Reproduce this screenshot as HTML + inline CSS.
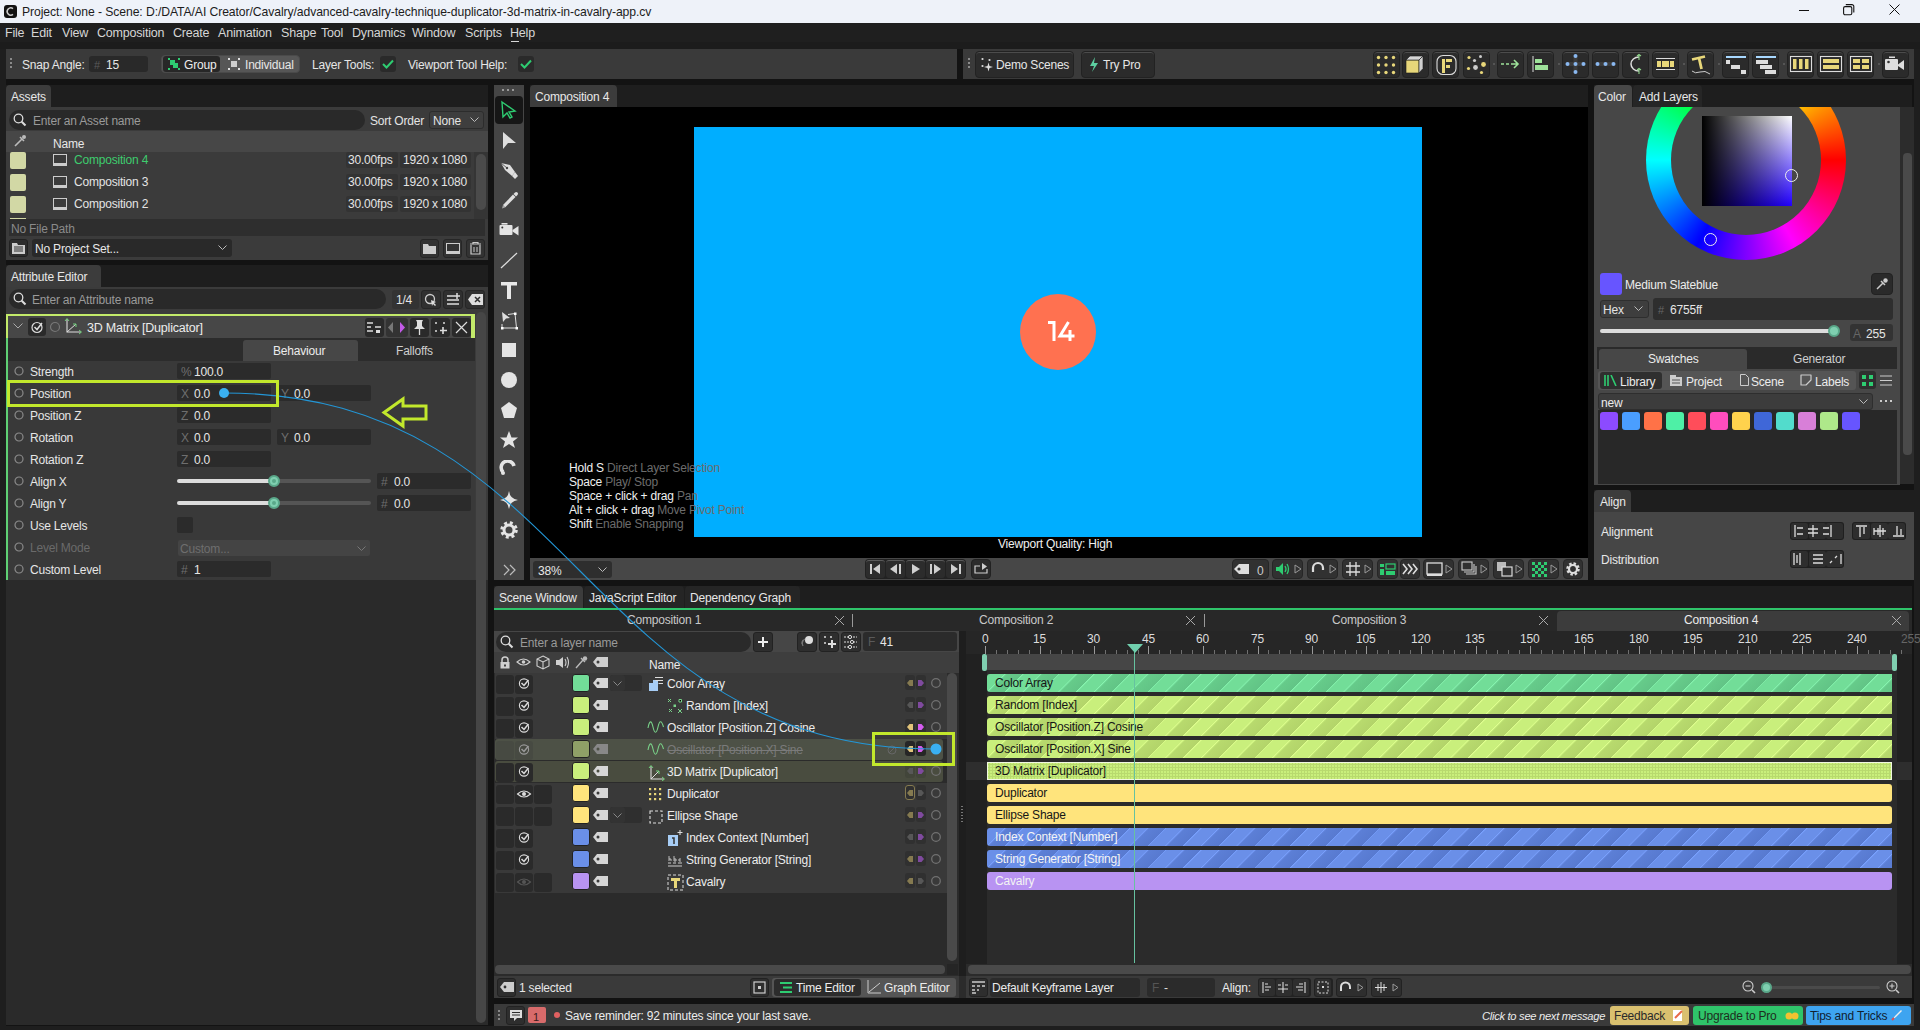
<!DOCTYPE html>
<html><head><meta charset="utf-8">
<style>
*{box-sizing:border-box;margin:0;padding:0}
html,body{width:1920px;height:1030px;overflow:hidden;background:#131313;font-family:"Liberation Sans",sans-serif;font-size:12px;color:#e4e4e4}
.a{position:absolute}
.t{position:absolute;white-space:nowrap;line-height:14px;letter-spacing:-0.2px;margin-top:1px}
</style></head><body>
<div class="a" style="left:0px;top:0px;width:1920px;height:23px;background:#eef2f9;"></div>
<div class="a" style="left:4px;top:5px;width:13px;height:13px;background:#121212;border-radius:3px;"></div>
<svg class="a" style="left:5px;top:6px" width="11" height="11" viewBox="0 0 11 11"><path d="M8 2.6A3.6 3.6 0 1 0 8 8.4" fill="none" stroke="#ccc" stroke-width="1.6"/></svg>
<div class="t" style="left:22px;top:4px;color:#1c1c1c;font-size:12.2px;letter-spacing:-0.09px;">Project: None - Scene: D:/DATA/AI Creator/Cavalry/advanced-cavalry-technique-duplicator-3d-matrix-in-cavalry-app.cv</div>
<div class="a" style="left:1799px;top:10px;width:10px;height:1px;background:#111;height:1.2px;"></div>
<svg class="a" style="left:1843px;top:4px" width="12" height="12"><rect x="0.6" y="2.6" width="8.2" height="8.2" rx="1.5" fill="none" stroke="#111" stroke-width="1.1"/><path d="M2.8 0.6H8.6A2 2 0 0 1 10.8 2.8V8.6" fill="none" stroke="#111" stroke-width="1.1"/></svg>
<svg class="a" style="left:1889px;top:4px" width="12" height="12"><path d="M0.5 0.5L10.5 10.5M10.5 0.5L0.5 10.5" stroke="#111" stroke-width="1"/></svg>
<div class="a" style="left:0px;top:23px;width:1920px;height:26px;background:#1c1c1c;"></div>
<div class="a" style="left:0px;top:23px;width:1920px;height:19px;background:#1f1f1f;"></div>
<div class="a" style="left:0px;top:49px;width:6px;height:981px;background:#1e1e1e;"></div>
<div class="a" style="left:1914px;top:49px;width:6px;height:981px;background:#1e1e1e;"></div>
<div class="a" style="left:0px;top:1026px;width:1920px;height:4px;background:#1e1e1e;"></div>
<div class="t" style="left:5px;top:25px;color:#d6d6d6;font-size:12.5px;">File</div>
<div class="t" style="left:31px;top:25px;color:#d6d6d6;font-size:12.5px;">Edit</div>
<div class="t" style="left:62px;top:25px;color:#d6d6d6;font-size:12.5px;">View</div>
<div class="t" style="left:97px;top:25px;color:#d6d6d6;font-size:12.5px;">Composition</div>
<div class="t" style="left:173px;top:25px;color:#d6d6d6;font-size:12.5px;">Create</div>
<div class="t" style="left:218px;top:25px;color:#d6d6d6;font-size:12.5px;">Animation</div>
<div class="t" style="left:281px;top:25px;color:#d6d6d6;font-size:12.5px;">Shape</div>
<div class="t" style="left:321px;top:25px;color:#d6d6d6;font-size:12.5px;">Tool</div>
<div class="t" style="left:352px;top:25px;color:#d6d6d6;font-size:12.5px;">Dynamics</div>
<div class="t" style="left:412px;top:25px;color:#d6d6d6;font-size:12.5px;">Window</div>
<div class="t" style="left:465px;top:25px;color:#d6d6d6;font-size:12.5px;">Scripts</div>
<div class="t" style="left:510px;top:25px;color:#d6d6d6;font-size:12.5px;">Help</div>
<div class="a" style="left:511px;top:41px;width:8px;height:1px;background:#d6d6d6;"></div>
<div class="a" style="left:6px;top:49px;width:951px;height:30px;background:#3a3a3a;"></div>
<div class="a" style="left:10px;top:58px;width:2px;height:2px;background:#8a8a8a;"></div>
<div class="a" style="left:10px;top:62px;width:2px;height:2px;background:#8a8a8a;"></div>
<div class="a" style="left:10px;top:66px;width:2px;height:2px;background:#8a8a8a;"></div>
<div class="t" style="left:22px;top:57px;color:#e6e6e6;font-size:12px;">Snap Angle:</div>
<div class="a" style="left:89px;top:56px;width:59px;height:16px;background:#292929;border-radius:3px;"></div>
<div class="t" style="left:94px;top:57px;color:#5a5a5a;font-size:11px;">#</div>
<div class="t" style="left:106px;top:57px;color:#e6e6e6;font-size:12px;">15</div>
<div class="a" style="left:161px;top:55px;width:139px;height:18px;background:#565656;border-radius:4px;border:1px solid #4a4a4a;"></div>
<div class="a" style="left:163px;top:56px;width:57px;height:16px;background:#272727;border-radius:3px;"></div>
<svg class="a" style="left:168px;top:58px;" width="12" height="12" viewBox="0 0 12 12"><rect x="0" y="0" width="2" height="2" fill="#2ecc71"/><rect x="10" y="0" width="2" height="2" fill="#2ecc71"/><rect x="0" y="10" width="2" height="2" fill="#2ecc71"/><rect x="10" y="10" width="2" height="2" fill="#2ecc71"/><rect x="2" y="2" width="5" height="5" fill="#2ecc71"/><rect x="5" y="5" width="5" height="5" fill="#2ecc71"/></svg>
<div class="t" style="left:184px;top:57px;color:#eeeeee;font-size:12px;">Group</div>
<svg class="a" style="left:228px;top:58px;" width="12" height="12" viewBox="0 0 12 12"><rect x="0" y="0" width="2" height="2" fill="#ddd"/><rect x="10" y="0" width="2" height="2" fill="#ddd"/><rect x="0" y="10" width="2" height="2" fill="#ddd"/><rect x="10" y="10" width="2" height="2" fill="#ddd"/><rect x="3" y="3" width="6" height="6" fill="#ccc"/></svg>
<div class="t" style="left:245px;top:57px;color:#e6e6e6;font-size:12px;">Individual</div>
<div class="t" style="left:312px;top:57px;color:#e6e6e6;font-size:12px;">Layer Tools:</div>
<div class="a" style="left:380px;top:56px;width:16px;height:16px;background:#2a2a2a;border-radius:3px;"></div>
<svg class="a" style="left:382px;top:59px;" width="12" height="10" viewBox="0 0 12 10"><path d="M1 5L4.5 8.5L11 1.5" fill="none" stroke="#2ecc71" stroke-width="2"/></svg>
<div class="t" style="left:408px;top:57px;color:#e6e6e6;font-size:12px;">Viewport Tool Help:</div>
<div class="a" style="left:518px;top:56px;width:16px;height:16px;background:#2a2a2a;border-radius:3px;"></div>
<svg class="a" style="left:520px;top:59px;" width="12" height="10" viewBox="0 0 12 10"><path d="M1 5L4.5 8.5L11 1.5" fill="none" stroke="#2ecc71" stroke-width="2"/></svg>
<div class="a" style="left:963px;top:49px;width:951px;height:30px;background:#3a3a3a;"></div>
<div class="a" style="left:968px;top:58px;width:2px;height:2px;background:#8a8a8a;"></div>
<div class="a" style="left:968px;top:62px;width:2px;height:2px;background:#8a8a8a;"></div>
<div class="a" style="left:968px;top:66px;width:2px;height:2px;background:#8a8a8a;"></div>
<div class="a" style="left:975px;top:51px;width:99px;height:27px;background:#2b2b2b;border-radius:4px;border:1px solid #222;box-shadow:inset 0 1px 0 #4c4c4c;"></div>
<svg class="a" style="left:980px;top:57px;" width="16" height="16" viewBox="0 0 16 16"><circle cx="2.5" cy="2" r="1.1" fill="#ddd"/><circle cx="9.5" cy="3" r="1.1" fill="#ddd"/><circle cx="2.5" cy="9" r="1.1" fill="#ddd"/><path d="M8.5 5.5L9.5 9L13 10L9.5 11L8.5 14.5L7.5 11L4 10L7.5 9Z" fill="#ddd"/></svg>
<div class="t" style="left:996px;top:57px;color:#e6e6e6;font-size:12px;">Demo Scenes</div>
<div class="a" style="left:1081px;top:51px;width:74px;height:27px;background:#2b2b2b;border-radius:4px;border:1px solid #222;box-shadow:inset 0 1px 0 #4c4c4c;"></div>
<svg class="a" style="left:1089px;top:57px;" width="10" height="16" viewBox="0 0 10 16"><path d="M6 0L1 9H5L3 15L9 6H5Z" fill="#5ccfa0"/></svg>
<div class="t" style="left:1103px;top:57px;color:#e6e6e6;font-size:12px;">Try Pro</div>
<div class="a" style="left:1373px;top:51px;width:27px;height:27px;background:#2b2b2b;border-radius:4px;border:1px solid #222;box-shadow:inset 0 1px 0 #4c4c4c;"></div>
<div class="a" style="left:1402px;top:51px;width:27px;height:27px;background:#2b2b2b;border-radius:4px;border:1px solid #222;box-shadow:inset 0 1px 0 #4c4c4c;"></div>
<div class="a" style="left:1432px;top:51px;width:27px;height:27px;background:#2b2b2b;border-radius:4px;border:1px solid #222;box-shadow:inset 0 1px 0 #4c4c4c;"></div>
<div class="a" style="left:1463px;top:51px;width:27px;height:27px;background:#2b2b2b;border-radius:4px;border:1px solid #222;box-shadow:inset 0 1px 0 #4c4c4c;"></div>
<div class="a" style="left:1497px;top:51px;width:27px;height:27px;background:#2b2b2b;border-radius:4px;border:1px solid #222;box-shadow:inset 0 1px 0 #4c4c4c;"></div>
<div class="a" style="left:1527px;top:51px;width:27px;height:27px;background:#2b2b2b;border-radius:4px;border:1px solid #222;box-shadow:inset 0 1px 0 #4c4c4c;"></div>
<div class="a" style="left:1562px;top:51px;width:27px;height:27px;background:#2b2b2b;border-radius:4px;border:1px solid #222;box-shadow:inset 0 1px 0 #4c4c4c;"></div>
<div class="a" style="left:1592px;top:51px;width:27px;height:27px;background:#2b2b2b;border-radius:4px;border:1px solid #222;box-shadow:inset 0 1px 0 #4c4c4c;"></div>
<div class="a" style="left:1622px;top:51px;width:27px;height:27px;background:#2b2b2b;border-radius:4px;border:1px solid #222;box-shadow:inset 0 1px 0 #4c4c4c;"></div>
<div class="a" style="left:1652px;top:51px;width:27px;height:27px;background:#2b2b2b;border-radius:4px;border:1px solid #222;box-shadow:inset 0 1px 0 #4c4c4c;"></div>
<div class="a" style="left:1687px;top:51px;width:27px;height:27px;background:#2b2b2b;border-radius:4px;border:1px solid #222;box-shadow:inset 0 1px 0 #4c4c4c;"></div>
<div class="a" style="left:1722px;top:51px;width:27px;height:27px;background:#2b2b2b;border-radius:4px;border:1px solid #222;box-shadow:inset 0 1px 0 #4c4c4c;"></div>
<div class="a" style="left:1752px;top:51px;width:27px;height:27px;background:#2b2b2b;border-radius:4px;border:1px solid #222;box-shadow:inset 0 1px 0 #4c4c4c;"></div>
<div class="a" style="left:1787px;top:51px;width:27px;height:27px;background:#2b2b2b;border-radius:4px;border:1px solid #222;box-shadow:inset 0 1px 0 #4c4c4c;"></div>
<div class="a" style="left:1817px;top:51px;width:27px;height:27px;background:#2b2b2b;border-radius:4px;border:1px solid #222;box-shadow:inset 0 1px 0 #4c4c4c;"></div>
<div class="a" style="left:1847px;top:51px;width:27px;height:27px;background:#2b2b2b;border-radius:4px;border:1px solid #222;box-shadow:inset 0 1px 0 #4c4c4c;"></div>
<div class="a" style="left:1882px;top:51px;width:27px;height:27px;background:#2b2b2b;border-radius:4px;border:1px solid #222;box-shadow:inset 0 1px 0 #4c4c4c;"></div>
<div class="a" style="left:1493px;top:63px;width:2px;height:2px;background:#555;"></div>
<div class="a" style="left:1558px;top:63px;width:2px;height:2px;background:#555;"></div>
<div class="a" style="left:1683px;top:63px;width:2px;height:2px;background:#555;"></div>
<div class="a" style="left:1718px;top:63px;width:2px;height:2px;background:#555;"></div>
<div class="a" style="left:1783px;top:63px;width:2px;height:2px;background:#555;"></div>
<div class="a" style="left:1878px;top:63px;width:2px;height:2px;background:#555;"></div>
<svg class="a" style="left:1373px;top:51px;" width="27" height="26" viewBox="0 0 27 26"><circle cx="5.5" cy="6.5" r="1.7" fill="#e8d77a"/><circle cx="5.5" cy="14.0" r="1.7" fill="#e8d77a"/><circle cx="5.5" cy="21.5" r="1.7" fill="#e8d77a"/><circle cx="13.0" cy="6.5" r="1.7" fill="#e8d77a"/><circle cx="13.0" cy="14.0" r="1.7" fill="#e8d77a"/><circle cx="13.0" cy="21.5" r="1.7" fill="#e8d77a"/><circle cx="20.5" cy="6.5" r="1.7" fill="#e8d77a"/><circle cx="20.5" cy="14.0" r="1.7" fill="#e8d77a"/><circle cx="20.5" cy="21.5" r="1.7" fill="#e8d77a"/></svg>
<svg class="a" style="left:1402px;top:51px;" width="27" height="26" viewBox="0 0 27 26"><rect x="4" y="9" width="13" height="13" fill="#e8d77a" stroke="#1a1a1a" stroke-width="0.6"/><path d="M4 9L8 5H21L17 9Z" fill="#d6d6d6" stroke="#1a1a1a" stroke-width="0.6"/><path d="M17 9L21 5V17.5L17 22Z" fill="#d0d0d0" stroke="#1a1a1a" stroke-width="0.6"/></svg>
<svg class="a" style="left:1432px;top:51px;" width="27" height="26" viewBox="0 0 27 26"><rect x="5" y="4.5" width="19" height="19" rx="6" fill="none" stroke="#ddd" stroke-width="1.1"/><rect x="10" y="8" width="3" height="14" fill="#e8d77a"/><rect x="14" y="8" width="6" height="3" fill="#e8d77a"/><rect x="14" y="14" width="4" height="3" fill="#e8d77a"/></svg>
<svg class="a" style="left:1463px;top:51px;" width="27" height="26" viewBox="0 0 27 26"><circle cx="6" cy="6.5" r="1.6" fill="#e8d77a"/><circle cx="17.5" cy="5.6" r="1.5" fill="#ccc"/><circle cx="11.5" cy="9.5" r="1.6" fill="#ccc"/><circle cx="20.5" cy="13.5" r="2.4" fill="#e8d77a"/><circle cx="5.5" cy="17.5" r="1.6" fill="#e8d77a"/><circle cx="12.5" cy="16.5" r="2.4" fill="#ccc"/><circle cx="18.5" cy="21.5" r="1.6" fill="#e8d77a"/></svg>
<svg class="a" style="left:1497px;top:51px;" width="27" height="26" viewBox="0 0 27 26"><path d="M4 13H7M9 13H12M14 13H21M17 9L21 13L17 17" fill="none" stroke="#9ee29a" stroke-width="1.6"/></svg>
<svg class="a" style="left:1527px;top:51px;" width="27" height="26" viewBox="0 0 27 26"><path d="M6 5V21" stroke="#ddd" stroke-width="1"/><rect x="8" y="8" width="7" height="4" fill="#9ee29a"/><rect x="8" y="14" width="13" height="5" fill="#9ee29a"/></svg>
<svg class="a" style="left:1562px;top:51px;" width="27" height="26" viewBox="0 0 27 26"><path d="M13.5 6V20M6 13H21" stroke="#3c3c3c" stroke-width="4"/><circle cx="13.5" cy="13" r="2" fill="#8ab8f0"/><circle cx="13.5" cy="5" r="2" fill="#8ab8f0"/><circle cx="13.5" cy="21" r="2" fill="#8ab8f0"/><circle cx="5.5" cy="13" r="2" fill="#8ab8f0"/><circle cx="21.5" cy="13" r="2" fill="#8ab8f0"/></svg>
<svg class="a" style="left:1592px;top:51px;" width="27" height="26" viewBox="0 0 27 26"><path d="M6 13H21" stroke="#3c3c3c" stroke-width="4"/><circle cx="5.5" cy="13" r="2" fill="#8ab8f0"/><circle cx="13.5" cy="13" r="2" fill="#8ab8f0"/><circle cx="21.5" cy="13" r="2" fill="#8ab8f0"/></svg>
<svg class="a" style="left:1622px;top:51px;" width="27" height="26" viewBox="0 0 27 26"><path d="M17 6A8 7 0 0 0 17 20" fill="none" stroke="#ddd" stroke-width="1.5"/><path d="M17 3V9M15 5L17 3.5L19 5M17 17V23M15 19L17 17.5L19 19" fill="none" stroke="#8fd48a" stroke-width="1.1"/></svg>
<svg class="a" style="left:1652px;top:51px;" width="27" height="26" viewBox="0 0 27 26"><path d="M4 7.5H23M4 18.5H23" stroke="#ddd" stroke-width="1"/><rect x="5" y="10" width="4" height="6" fill="#e8d77a"/><rect x="10" y="10" width="7" height="6" fill="#e8d77a"/><rect x="18" y="10" width="4" height="6" fill="#e8d77a"/></svg>
<svg class="a" style="left:1687px;top:51px;" width="27" height="26" viewBox="0 0 27 26"><path d="M5 8.5L18 5.5M12 7L14.5 18" fill="none" stroke="#e8d77a" stroke-width="2.8"/><path d="M5 20Q8 23 13 21T23 23" fill="none" stroke="#ccc" stroke-width="1"/></svg>
<svg class="a" style="left:1722px;top:51px;" width="27" height="26" viewBox="0 0 27 26"><path d="M4 6H24" stroke="#a8d8ff" stroke-width="2"/><rect x="4" y="9" width="4" height="4" fill="#ddd"/><rect x="9" y="14" width="9" height="4" fill="#ddd"/><rect x="19" y="19" width="5" height="4" fill="#ddd"/></svg>
<svg class="a" style="left:1752px;top:51px;" width="27" height="26" viewBox="0 0 27 26"><path d="M4 6H24" stroke="#a8d8ff" stroke-width="2"/><rect x="4" y="9" width="12" height="4" fill="#ddd"/><rect x="8" y="14" width="12" height="4" fill="#ddd"/><rect x="13" y="19" width="11" height="4" fill="#ddd"/></svg>
<svg class="a" style="left:1787px;top:51px;" width="27" height="26" viewBox="0 0 27 26"><rect x="3.5" y="5.5" width="21" height="15" fill="none" stroke="#ddd" stroke-width="1.1"/><rect x="6" y="8" width="3.5" height="10" fill="#e8d77a"/><rect x="12" y="8" width="3.5" height="10" fill="#e8d77a"/><rect x="18" y="8" width="3.5" height="10" fill="#e8d77a"/></svg>
<svg class="a" style="left:1817px;top:51px;" width="27" height="26" viewBox="0 0 27 26"><rect x="3.5" y="5.5" width="21" height="15" fill="none" stroke="#ddd" stroke-width="1.1"/><rect x="6" y="8" width="16" height="4" fill="#e8d77a"/><rect x="6" y="14" width="16" height="4" fill="#e8d77a"/></svg>
<svg class="a" style="left:1847px;top:51px;" width="27" height="26" viewBox="0 0 27 26"><rect x="3.5" y="5.5" width="21" height="15" fill="none" stroke="#ddd" stroke-width="1.1"/><rect x="6" y="8" width="7" height="4" fill="#e8d77a"/><rect x="15" y="8" width="7" height="4" fill="#e8d77a"/><rect x="6" y="14" width="7" height="4" fill="#e8d77a"/><rect x="15" y="14" width="7" height="4" fill="#e8d77a"/></svg>
<svg class="a" style="left:1882px;top:51px;" width="27" height="26" viewBox="0 0 27 26"><rect x="3" y="8" width="13" height="11" rx="1" fill="#ddd"/><circle cx="6.5" cy="11" r="1.3" fill="#333"/><path d="M16 13.5L22 9V19L16 15Z" fill="#ddd"/><rect x="7" y="5.5" width="6" height="1.5" fill="#ddd"/></svg>
<div class="a" style="left:6px;top:85px;width:482px;height:22px;background:#1e1e1e;"></div>
<div class="a" style="left:6px;top:85px;width:45px;height:22px;background:#3c3c3c;border-radius:4px 4px 0 0;"></div>
<div class="t" style="left:11px;top:89px;color:#e8e8e8;font-size:12px;">Assets</div>
<div class="a" style="left:6px;top:107px;width:482px;height:153px;background:#3b3b3b;"></div>
<div class="a" style="left:9px;top:110px;width:356px;height:20px;background:#292929;border-radius:10px;"></div>
<svg class="a" style="left:13px;top:113px;" width="14" height="14" viewBox="0 0 14 14"><circle cx="5.5" cy="5.5" r="4.3" fill="none" stroke="#ddd" stroke-width="1.3"/><path d="M8.7 8.7L12.5 12.5" stroke="#ddd" stroke-width="2"/></svg>
<div class="t" style="left:33px;top:113px;color:#9a9a9a;font-size:12px;">Enter an Asset name</div>
<div class="t" style="left:370px;top:113px;color:#e4e4e4;font-size:12px;">Sort Order</div>
<div class="a" style="left:429px;top:111px;width:55px;height:18px;background:#3e3e3e;border-radius:3px;border:1px solid #2c2c2c;"></div>
<div class="t" style="left:433px;top:113px;color:#e4e4e4;font-size:12px;">None</div>
<svg class="a" style="left:470px;top:117px;" width="9" height="6" viewBox="0 0 9 6"><path d="M0.5 0.5L4.5 4.5L8.5 0.5" fill="none" stroke="#bbb" stroke-width="1"/></svg>
<div class="a" style="left:6px;top:131px;width:482px;height:21px;background:#474747;"></div>
<svg class="a" style="left:13px;top:134px;" width="14" height="14" viewBox="0 0 14 14"><path d="M2 12L9 5M7 3L11 7" stroke="#bbb" stroke-width="1.6" fill="none"/><circle cx="11" cy="3" r="2" fill="#bbb"/></svg>
<div class="t" style="left:53px;top:136px;color:#e8e8e8;font-size:12px;">Name</div>
<div class="a" style="left:10px;top:152px;width:16px;height:17px;background:#d2d8a5;border-radius:2px;"></div>
<svg class="a" style="left:53px;top:154px;" width="15" height="13" viewBox="0 0 15 13"><rect x="0.5" y="0.5" width="13" height="9" fill="none" stroke="#ccc" stroke-width="1"/><rect x="0" y="10" width="14" height="2" fill="#ccc"/></svg>
<div class="t" style="left:74px;top:152px;color:#3ecc6e;font-size:12px;">Composition 4</div>
<div class="a" style="left:346px;top:152px;width:52px;height:16px;background:#333333;border-radius:2px;"></div>
<div class="t" style="left:348px;top:152px;color:#e4e4e4;font-size:12px;">30.00fps</div>
<div class="a" style="left:400px;top:152px;width:71px;height:16px;background:#333333;border-radius:2px;"></div>
<div class="t" style="left:403px;top:152px;color:#e4e4e4;font-size:12px;">1920 x 1080</div>
<div class="a" style="left:10px;top:174px;width:16px;height:17px;background:#d2d8a5;border-radius:2px;"></div>
<svg class="a" style="left:53px;top:176px;" width="15" height="13" viewBox="0 0 15 13"><rect x="0.5" y="0.5" width="13" height="9" fill="none" stroke="#ccc" stroke-width="1"/><rect x="0" y="10" width="14" height="2" fill="#ccc"/></svg>
<div class="t" style="left:74px;top:174px;color:#e4e4e4;font-size:12px;">Composition 3</div>
<div class="a" style="left:346px;top:174px;width:52px;height:16px;background:#333333;border-radius:2px;"></div>
<div class="t" style="left:348px;top:174px;color:#e4e4e4;font-size:12px;">30.00fps</div>
<div class="a" style="left:400px;top:174px;width:71px;height:16px;background:#333333;border-radius:2px;"></div>
<div class="t" style="left:403px;top:174px;color:#e4e4e4;font-size:12px;">1920 x 1080</div>
<div class="a" style="left:10px;top:196px;width:16px;height:17px;background:#d2d8a5;border-radius:2px;"></div>
<svg class="a" style="left:53px;top:198px;" width="15" height="13" viewBox="0 0 15 13"><rect x="0.5" y="0.5" width="13" height="9" fill="none" stroke="#ccc" stroke-width="1"/><rect x="0" y="10" width="14" height="2" fill="#ccc"/></svg>
<div class="t" style="left:74px;top:196px;color:#e4e4e4;font-size:12px;">Composition 2</div>
<div class="a" style="left:346px;top:196px;width:52px;height:16px;background:#333333;border-radius:2px;"></div>
<div class="t" style="left:348px;top:196px;color:#e4e4e4;font-size:12px;">30.00fps</div>
<div class="a" style="left:400px;top:196px;width:71px;height:16px;background:#333333;border-radius:2px;"></div>
<div class="t" style="left:403px;top:196px;color:#e4e4e4;font-size:12px;">1920 x 1080</div>
<div class="a" style="left:10px;top:218px;width:16px;height:2px;background:#d2d8a5;"></div>
<div class="a" style="left:474px;top:152px;width:14px;height:67px;background:#353535;"></div>
<div class="a" style="left:476px;top:154px;width:10px;height:56px;background:#4b4b4b;border-radius:5px;"></div>
<div class="a" style="left:9px;top:219px;width:476px;height:17px;background:#2e2e2e;"></div>
<div class="t" style="left:11px;top:221px;color:#8a8a8a;font-size:12px;">No File Path</div>
<div class="a" style="left:9px;top:239px;width:19px;height:18px;background:#2e2e2e;border-radius:3px;border:1px solid #222;"></div>
<svg class="a" style="left:12px;top:242px;" width="14" height="12" viewBox="0 0 14 12"><path d="M0 1H5L6 3H13V12H0Z" fill="#ccc"/><path d="M2 5H11M2 7H11M2 9H11" stroke="#333" stroke-width="1"/></svg>
<div class="a" style="left:32px;top:239px;width:200px;height:18px;background:#292929;border-radius:3px;"></div>
<div class="t" style="left:35px;top:241px;color:#e8e8e8;font-size:12px;">No Project Set...</div>
<svg class="a" style="left:218px;top:245px;" width="9" height="6" viewBox="0 0 9 6"><path d="M0.5 0.5L4.5 4.5L8.5 0.5" fill="none" stroke="#bbb" stroke-width="1"/></svg>
<div class="a" style="left:420px;top:239px;width:19px;height:19px;background:#333;border-radius:3px;border:1px solid #262626;"></div>
<div class="a" style="left:443px;top:239px;width:19px;height:19px;background:#333;border-radius:3px;border:1px solid #262626;"></div>
<div class="a" style="left:466px;top:239px;width:19px;height:19px;background:#333;border-radius:3px;border:1px solid #262626;"></div>
<svg class="a" style="left:423px;top:243px;" width="14" height="11" viewBox="0 0 14 11"><path d="M0 1H5L6 3H13V11H0Z" fill="#ccc"/></svg>
<svg class="a" style="left:446px;top:243px;" width="14" height="11" viewBox="0 0 14 11"><rect x="0.5" y="0.5" width="13" height="8" fill="none" stroke="#ccc"/><rect x="0" y="9" width="14" height="2" fill="#ccc"/></svg>
<svg class="a" style="left:469px;top:242px;" width="13" height="13" viewBox="0 0 13 13"><path d="M1 2H12M4 2V0.5H9V2M2 3V12H11V3" fill="none" stroke="#ccc" stroke-width="1.2"/><path d="M5 5V10M8 5V10" stroke="#ccc"/></svg>
<div class="a" style="left:6px;top:265px;width:482px;height:22px;background:#1e1e1e;"></div>
<div class="a" style="left:6px;top:265px;width:95px;height:22px;background:#3c3c3c;border-radius:4px 4px 0 0;"></div>
<div class="t" style="left:11px;top:269px;color:#e8e8e8;font-size:12px;">Attribute Editor</div>
<div class="a" style="left:6px;top:287px;width:482px;height:738px;background:#2a2a2a;"></div>
<div class="a" style="left:6px;top:287px;width:482px;height:293px;background:#3b3b3b;"></div>
<div class="a" style="left:9px;top:289px;width:377px;height:20px;background:#292929;border-radius:10px;"></div>
<svg class="a" style="left:13px;top:292px;" width="14" height="14" viewBox="0 0 14 14"><circle cx="5.5" cy="5.5" r="4.3" fill="none" stroke="#ddd" stroke-width="1.3"/><path d="M8.7 8.7L12.5 12.5" stroke="#ddd" stroke-width="2"/></svg>
<div class="t" style="left:32px;top:292px;color:#9a9a9a;font-size:12px;">Enter an Attribute name</div>
<div class="a" style="left:392px;top:290px;width:27px;height:19px;background:#333;border-radius:3px;"></div>
<div class="t" style="left:396px;top:292px;color:#e4e4e4;font-size:12px;">1/4</div>
<div class="a" style="left:421px;top:290px;width:20px;height:19px;background:#303030;border-radius:3px;border:1px solid #262626;"></div>
<div class="a" style="left:443px;top:290px;width:20px;height:19px;background:#303030;border-radius:3px;border:1px solid #262626;"></div>
<div class="a" style="left:465px;top:290px;width:20px;height:19px;background:#303030;border-radius:3px;border:1px solid #262626;"></div>
<svg class="a" style="left:424px;top:293px;" width="14" height="14" viewBox="0 0 14 14"><circle cx="6" cy="6" r="4.5" fill="none" stroke="#ccc" stroke-width="1.3"/><path d="M7 7L12 9L10 10L12 12L11 13L9 11L8 13Z" fill="#ddd"/></svg>
<svg class="a" style="left:446px;top:293px;" width="14" height="13" viewBox="0 0 14 13"><path d="M1 3H8M1 7H13M1 11H13M11 0V6M8 3H14" stroke="#ddd" stroke-width="1.5"/></svg>
<svg class="a" style="left:468px;top:294px;" width="15" height="11" viewBox="0 0 15 11"><path d="M4 0H15V11H4L0 5.5Z" fill="#ddd"/><path d="M7 3L12 8M12 3L7 8" stroke="#303030" stroke-width="1.5"/></svg>
<div class="a" style="left:6px;top:314px;width:469px;height:24px;background:#474747;border-top:2px solid #c3ea6a;border-left:2px solid #c3ea6a;border-right:4px solid #c3ea6a;"></div>
<div class="a" style="left:6px;top:338px;width:2px;height:242px;background:#5fcf74;"></div>
<svg class="a" style="left:13px;top:323px;" width="10" height="6" viewBox="0 0 10 6"><path d="M0.5 0.5L5 5L9.5 0.5" fill="none" stroke="#aaa" stroke-width="1"/></svg>
<div class="a" style="left:28px;top:318px;width:18px;height:18px;background:#2a2a2a;border-radius:3px;"></div>
<svg class="a" style="left:30px;top:320px;" width="14" height="14" viewBox="0 0 14 14"><circle cx="7" cy="7.5" r="5" fill="none" stroke="#ddd" stroke-width="1.2"/><path d="M4.5 7L7 9.5L12 3" fill="none" stroke="#ddd" stroke-width="1.5"/></svg>
<svg class="a" style="left:49px;top:321px;" width="12" height="12" viewBox="0 0 12 12"><circle cx="6" cy="6" r="4.5" fill="none" stroke="#777" stroke-width="1.2"/></svg>
<svg class="a" style="left:64px;top:317px;" width="19" height="18" viewBox="0 0 19 18"><path d="M3 2V15H17" fill="none" stroke="#ddd" stroke-width="1.1"/><path d="M3 15L12 7" stroke="#ddd" stroke-width="1"/><path d="M1 4L3 1.5L5 4M15 13L17.5 15L15 17M9 7H12V10" fill="none" stroke="#6fcf7a" stroke-width="1"/></svg>
<div class="t" style="left:87px;top:320px;color:#ececec;font-size:12.5px;">3D Matrix [Duplicator]</div>
<div class="a" style="left:365px;top:318px;width:19px;height:19px;background:#2a2a2a;border-radius:3px;"></div>
<svg class="a" style="left:367px;top:321px;" width="15" height="13" viewBox="0 0 15 13"><path d="M0 2H6M0 6H4M8 6H14M0 10H6" stroke="#ddd" stroke-width="1.5"/><rect x="9" y="9" width="4" height="3" fill="#ddd"/></svg>
<div class="a" style="left:386px;top:318px;width:22px;height:19px;background:#333;border-radius:3px;"></div>
<svg class="a" style="left:388px;top:322px;" width="18" height="11" viewBox="0 0 18 11"><path d="M5 0V11L0 5.5Z" fill="#777"/><path d="M12 0L17 5.5L12 11Z" fill="#c35ae8"/></svg>
<div class="a" style="left:410px;top:318px;width:19px;height:19px;background:#2a2a2a;border-radius:3px;"></div>
<svg class="a" style="left:413px;top:320px;" width="13" height="15" viewBox="0 0 13 15"><path d="M3 0H10L9 2V6L12 9H1L4 6V2Z" fill="#ddd"/><path d="M6.5 9V15" stroke="#ddd" stroke-width="1.3"/></svg>
<div class="a" style="left:431px;top:318px;width:19px;height:19px;background:#2a2a2a;border-radius:3px;"></div>
<svg class="a" style="left:433px;top:320px;" width="15" height="15" viewBox="0 0 15 15"><circle cx="3" cy="3" r="1" fill="#ddd"/><circle cx="11" cy="3" r="1" fill="#ddd"/><circle cx="3" cy="11" r="1" fill="#ddd"/><path d="M10 7V14M7 10.5H14" stroke="#ddd" stroke-width="1.6"/></svg>
<div class="a" style="left:452px;top:318px;width:19px;height:19px;background:#2a2a2a;border-radius:3px;"></div>
<svg class="a" style="left:455px;top:321px;" width="13" height="13" viewBox="0 0 13 13"><path d="M1 1L12 12M12 1L1 12" stroke="#ddd" stroke-width="1.2"/></svg>
<div class="a" style="left:8px;top:338px;width:467px;height:23px;background:#2c2c2c;"></div>
<div class="a" style="left:243px;top:340px;width:115px;height:21px;background:#474747;border-radius:3px 3px 0 0;"></div>
<div class="t" style="left:273px;top:343px;color:#ececec;font-size:12px;">Behaviour</div>
<div class="t" style="left:396px;top:343px;color:#cfcfcf;font-size:12px;">Falloffs</div>
<div class="a" style="left:8px;top:361px;width:467px;height:219px;background:#393939;"></div>
<div class="a" style="left:476px;top:312px;width:10px;height:711px;background:#464646;border-radius:5px;"></div>
<svg class="a" style="left:13px;top:365px;" width="12" height="12" viewBox="0 0 12 12"><circle cx="6" cy="6" r="4" fill="none" stroke="#8a8a8a" stroke-width="1.2"/></svg>
<div class="t" style="left:30px;top:364px;color:#e6e6e6;font-size:12px;">Strength</div>
<svg class="a" style="left:13px;top:387px;" width="12" height="12" viewBox="0 0 12 12"><circle cx="6" cy="6" r="4" fill="none" stroke="#8a8a8a" stroke-width="1.2"/></svg>
<div class="t" style="left:30px;top:386px;color:#e6e6e6;font-size:12px;">Position</div>
<svg class="a" style="left:13px;top:409px;" width="12" height="12" viewBox="0 0 12 12"><circle cx="6" cy="6" r="4" fill="none" stroke="#8a8a8a" stroke-width="1.2"/></svg>
<div class="t" style="left:30px;top:408px;color:#e6e6e6;font-size:12px;">Position Z</div>
<svg class="a" style="left:13px;top:431px;" width="12" height="12" viewBox="0 0 12 12"><circle cx="6" cy="6" r="4" fill="none" stroke="#8a8a8a" stroke-width="1.2"/></svg>
<div class="t" style="left:30px;top:430px;color:#e6e6e6;font-size:12px;">Rotation</div>
<svg class="a" style="left:13px;top:453px;" width="12" height="12" viewBox="0 0 12 12"><circle cx="6" cy="6" r="4" fill="none" stroke="#8a8a8a" stroke-width="1.2"/></svg>
<div class="t" style="left:30px;top:452px;color:#e6e6e6;font-size:12px;">Rotation Z</div>
<svg class="a" style="left:13px;top:475px;" width="12" height="12" viewBox="0 0 12 12"><circle cx="6" cy="6" r="4" fill="none" stroke="#8a8a8a" stroke-width="1.2"/></svg>
<div class="t" style="left:30px;top:474px;color:#e6e6e6;font-size:12px;">Align X</div>
<svg class="a" style="left:13px;top:497px;" width="12" height="12" viewBox="0 0 12 12"><circle cx="6" cy="6" r="4" fill="none" stroke="#8a8a8a" stroke-width="1.2"/></svg>
<div class="t" style="left:30px;top:496px;color:#e6e6e6;font-size:12px;">Align Y</div>
<svg class="a" style="left:13px;top:519px;" width="12" height="12" viewBox="0 0 12 12"><circle cx="6" cy="6" r="4" fill="none" stroke="#8a8a8a" stroke-width="1.2"/></svg>
<div class="t" style="left:30px;top:518px;color:#e6e6e6;font-size:12px;">Use Levels</div>
<svg class="a" style="left:13px;top:541px;" width="12" height="12" viewBox="0 0 12 12"><circle cx="6" cy="6" r="4" fill="none" stroke="#8a8a8a" stroke-width="1.2"/></svg>
<div class="t" style="left:30px;top:540px;color:#6a6a6a;font-size:12px;">Level Mode</div>
<svg class="a" style="left:13px;top:563px;" width="12" height="12" viewBox="0 0 12 12"><circle cx="6" cy="6" r="4" fill="none" stroke="#8a8a8a" stroke-width="1.2"/></svg>
<div class="t" style="left:30px;top:562px;color:#e6e6e6;font-size:12px;">Custom Level</div>
<div class="a" style="left:177px;top:363px;width:94px;height:16px;background:#2b2b2b;border-radius:2px;"></div>
<div class="t" style="left:181px;top:364px;color:#6e6e6e;font-size:12px;">%</div>
<div class="t" style="left:194px;top:364px;color:#e6e6e6;font-size:12px;">100.0</div>
<div class="a" style="left:177px;top:385px;width:94px;height:16px;background:#2b2b2b;border-radius:2px;"></div>
<div class="t" style="left:181px;top:386px;color:#6e6e6e;font-size:12px;">X</div>
<div class="t" style="left:194px;top:386px;color:#e6e6e6;font-size:12px;">0.0</div>
<div class="a" style="left:277px;top:385px;width:94px;height:16px;background:#2b2b2b;border-radius:2px;"></div>
<div class="t" style="left:281px;top:386px;color:#6e6e6e;font-size:12px;">Y</div>
<div class="t" style="left:294px;top:386px;color:#e6e6e6;font-size:12px;">0.0</div>
<div class="a" style="left:177px;top:407px;width:94px;height:16px;background:#2b2b2b;border-radius:2px;"></div>
<div class="t" style="left:181px;top:408px;color:#6e6e6e;font-size:12px;">Z</div>
<div class="t" style="left:194px;top:408px;color:#e6e6e6;font-size:12px;">0.0</div>
<div class="a" style="left:177px;top:429px;width:94px;height:16px;background:#2b2b2b;border-radius:2px;"></div>
<div class="t" style="left:181px;top:430px;color:#6e6e6e;font-size:12px;">X</div>
<div class="t" style="left:194px;top:430px;color:#e6e6e6;font-size:12px;">0.0</div>
<div class="a" style="left:277px;top:429px;width:94px;height:16px;background:#2b2b2b;border-radius:2px;"></div>
<div class="t" style="left:281px;top:430px;color:#6e6e6e;font-size:12px;">Y</div>
<div class="t" style="left:294px;top:430px;color:#e6e6e6;font-size:12px;">0.0</div>
<div class="a" style="left:177px;top:451px;width:94px;height:16px;background:#2b2b2b;border-radius:2px;"></div>
<div class="t" style="left:181px;top:452px;color:#6e6e6e;font-size:12px;">Z</div>
<div class="t" style="left:194px;top:452px;color:#e6e6e6;font-size:12px;">0.0</div>
<div class="a" style="left:177px;top:479px;width:97px;height:4px;background:#dcdcdc;border-radius:2px;"></div>
<div class="a" style="left:274px;top:479px;width:97px;height:4px;background:#555;border-radius:2px;"></div>
<div class="a" style="left:268px;top:475px;width:12px;height:12px;background:#7fcfb0;border-radius:50%;border:2px solid #5aa88a;"></div>
<div class="a" style="left:272px;top:479px;width:4px;height:4px;background:#5aa88a;border-radius:50%;"></div>
<div class="a" style="left:377px;top:473px;width:94px;height:16px;background:#2b2b2b;border-radius:2px;"></div>
<div class="t" style="left:381px;top:474px;color:#6e6e6e;font-size:12px;">#</div>
<div class="t" style="left:394px;top:474px;color:#e6e6e6;font-size:12px;">0.0</div>
<div class="a" style="left:177px;top:501px;width:97px;height:4px;background:#dcdcdc;border-radius:2px;"></div>
<div class="a" style="left:274px;top:501px;width:97px;height:4px;background:#555;border-radius:2px;"></div>
<div class="a" style="left:268px;top:497px;width:12px;height:12px;background:#7fcfb0;border-radius:50%;border:2px solid #5aa88a;"></div>
<div class="a" style="left:272px;top:501px;width:4px;height:4px;background:#5aa88a;border-radius:50%;"></div>
<div class="a" style="left:377px;top:495px;width:94px;height:16px;background:#2b2b2b;border-radius:2px;"></div>
<div class="t" style="left:381px;top:496px;color:#6e6e6e;font-size:12px;">#</div>
<div class="t" style="left:394px;top:496px;color:#e6e6e6;font-size:12px;">0.0</div>
<div class="a" style="left:177px;top:517px;width:16px;height:16px;background:#2b2b2b;border-radius:2px;"></div>
<div class="a" style="left:178px;top:540px;width:192px;height:16px;background:#444;border-radius:2px;"></div>
<div class="t" style="left:180px;top:541px;color:#6e6e6e;font-size:12px;">Custom...</div>
<svg class="a" style="left:357px;top:546px;" width="9" height="5" viewBox="0 0 9 5"><path d="M0.5 0.5L4.5 4.5L8.5 0.5" fill="none" stroke="#777" stroke-width="1"/></svg>
<div class="a" style="left:177px;top:561px;width:94px;height:16px;background:#2b2b2b;border-radius:2px;"></div>
<div class="t" style="left:181px;top:562px;color:#6e6e6e;font-size:12px;">#</div>
<div class="t" style="left:194px;top:562px;color:#e6e6e6;font-size:12px;">1</div>
<div class="a" style="left:494px;top:85px;width:30px;height:495px;background:#454545;"></div>
<div class="a" style="left:502px;top:89px;width:2px;height:2px;background:#999;"></div>
<div class="a" style="left:507px;top:89px;width:2px;height:2px;background:#999;"></div>
<div class="a" style="left:512px;top:89px;width:2px;height:2px;background:#999;"></div>
<div class="a" style="left:495px;top:96px;width:28px;height:28px;background:#161616;border-radius:4px;"></div>
<svg class="a" style="left:499px;top:100px;" width="20" height="20" viewBox="0 0 20 20"><path d="M3 2L16 11L10 12L13 17L11 18L8 13L4 17Z" fill="none" stroke="#2ecc71" stroke-width="1.4"/></svg>
<svg class="a" style="left:499px;top:130px;" width="20" height="20" viewBox="0 0 20 20"><path d="M4 2L17 13H9L4 19Z" fill="#dedede"/></svg>
<svg class="a" style="left:499px;top:160px;" width="20" height="20" viewBox="0 0 20 20"><path d="M2 3L11 5L16 12L13 16L6 10Z" fill="#dedede"/><path d="M13 16L16 19L19 16L16 12" fill="#dedede"/><circle cx="8" cy="8" r="1.2" fill="#444"/><path d="M2 3L8 8" stroke="#444" stroke-width="0.8"/></svg>
<svg class="a" style="left:499px;top:190px;" width="20" height="20" viewBox="0 0 20 20"><path d="M4 15L14 4.5L16.5 7L6 17.5Z" fill="#dedede"/><path d="M14.5 4L16 2.5A1.6 1.6 0 0 1 18.5 5L17 6.5Z" fill="#dedede"/><path d="M4 15L6 17.5L3 18.5Z" fill="#aaa"/></svg>
<svg class="a" style="left:499px;top:220px;" width="20" height="20" viewBox="0 0 20 20"><rect x="0.5" y="5" width="13" height="10" rx="1" fill="#e4e4e4"/><circle cx="3.3" cy="7.6" r="1" fill="#333"/><path d="M13.5 10L19.5 6V15.5L13.5 11.5Z" fill="#e4e4e4"/><rect x="2.5" y="3" width="6" height="1.6" fill="#e4e4e4"/></svg>
<svg class="a" style="left:499px;top:250px;" width="20" height="20" viewBox="0 0 20 20"><path d="M2 18L18 3" stroke="#dedede" stroke-width="1.2"/></svg>
<svg class="a" style="left:499px;top:280px;" width="20" height="20" viewBox="0 0 20 20"><path d="M2 2H18V5.5H12V19H8V5.5H2Z" fill="#e8e8e8"/></svg>
<svg class="a" style="left:499px;top:310px;" width="20" height="20" viewBox="0 0 20 20"><path d="M3 2L11 8L7 8.5L4 12Z" fill="#dedede"/><path d="M3 18H17.5L16 3.5L9 4.5M3 14V18" fill="none" stroke="#dedede" stroke-width="1"/><rect x="2" y="17" width="2.5" height="2.5" fill="#fff"/><rect x="16.5" y="17" width="2.5" height="2.5" fill="#fff"/><rect x="15" y="2.5" width="2.5" height="2.5" fill="#fff"/></svg>
<svg class="a" style="left:499px;top:340px;" width="20" height="20" viewBox="0 0 20 20"><rect x="3" y="3" width="14" height="14" fill="#e4e4e4"/></svg>
<svg class="a" style="left:499px;top:370px;" width="20" height="20" viewBox="0 0 20 20"><circle cx="10" cy="10" r="8" fill="#e4e4e4"/></svg>
<svg class="a" style="left:499px;top:400px;" width="20" height="20" viewBox="0 0 20 20"><path d="M10 2L18 8L15 18H5L2 8Z" fill="#e4e4e4"/></svg>
<svg class="a" style="left:499px;top:430px;" width="20" height="20" viewBox="0 0 20 20"><path d="M10 1L12.5 7.5H19L14 11.5L16 18L10 14L4 18L6 11.5L1 7.5H7.5Z" fill="#e4e4e4"/></svg>
<svg class="a" style="left:499px;top:460px;" width="20" height="20" viewBox="0 0 20 20"><path d="M4 12A6.5 6.5 0 1 1 15 6" fill="none" stroke="#e4e4e4" stroke-width="3.5"/><circle cx="4" cy="13" r="2" fill="#e4e4e4"/></svg>
<svg class="a" style="left:499px;top:490px;" width="20" height="20" viewBox="0 0 20 20"><path d="M10 1Q11 9 19 10Q11 11 10 19Q9 11 1 10Q9 9 10 1Z" fill="#e4e4e4"/></svg>
<svg class="a" style="left:499px;top:520px;" width="20" height="20" viewBox="0 0 20 20"><path d="M8.5 1H11.5L12 4L14.5 5L17 3L19 5.5L17 8L17.5 10.5L20 11.5V14.5L17 15L16 17L18 19.5L15.5 21.5" fill="none"/><circle cx="10" cy="10" r="6.5" fill="none" stroke="#e4e4e4" stroke-width="4.5" stroke-dasharray="2.6 2.5"/><circle cx="10" cy="10" r="5" fill="none" stroke="#e4e4e4" stroke-width="3"/></svg>
<svg class="a" style="left:502px;top:563px;" width="16" height="14" viewBox="0 0 16 14"><path d="M2 2L7 7L2 12M8 2L13 7L8 12" fill="none" stroke="#bbb" stroke-width="1.2"/></svg>
<div class="a" style="left:530px;top:85px;width:1058px;height:22px;background:#1e1e1e;"></div>
<div class="a" style="left:530px;top:85px;width:87px;height:22px;background:#3c3c3c;border-radius:4px 4px 0 0;"></div>
<div class="t" style="left:535px;top:89px;color:#e8e8e8;font-size:12px;">Composition 4</div>
<div class="a" style="left:530px;top:107px;width:1058px;height:451px;background:#000;"></div>
<div class="a" style="left:694px;top:127px;width:728px;height:410px;background:#00aeff;"></div>
<div class="a" style="left:1020px;top:294px;width:76px;height:76px;background:#ff7150;border-radius:50%;"></div>
<svg class="a" style="left:1047px;top:321px;" width="28" height="21" viewBox="0 0 28 21"><path d="M1 1.6H7V20" fill="none" stroke="#fff" stroke-width="3" stroke-linejoin="miter"/><path d="M21.5 1L13 15H27.5M23 9V20" fill="none" stroke="#fff" stroke-width="3"/></svg>
<div class="t" style="left:569px;top:460px;font-size:12px;color:#f0f0f0">Hold S <span style="color:#6c6c6c">Direct Layer Selection</span></div>
<div class="t" style="left:569px;top:474px;font-size:12px;color:#f0f0f0">Space <span style="color:#6c6c6c">Play/ Stop</span></div>
<div class="t" style="left:569px;top:488px;font-size:12px;color:#f0f0f0">Space + click + drag <span style="color:#6c6c6c">Pan</span></div>
<div class="t" style="left:569px;top:502px;font-size:12px;color:#f0f0f0">Alt + click + drag <span style="color:#6c6c6c">Move Pivot Point</span></div>
<div class="t" style="left:569px;top:516px;font-size:12px;color:#f0f0f0">Shift <span style="color:#6c6c6c">Enable Snapping</span></div>
<div class="t" style="left:998px;top:536px;color:#f0f0f0;font-size:12px;">Viewport Quality: High</div>
<div class="a" style="left:530px;top:558px;width:1058px;height:22px;background:#474747;"></div>
<div class="a" style="left:533px;top:561px;width:79px;height:17px;background:#2e2e2e;border-radius:3px;"></div>
<div class="t" style="left:538px;top:563px;color:#e6e6e6;font-size:12px;">38%</div>
<svg class="a" style="left:598px;top:567px;" width="9" height="6" viewBox="0 0 9 6"><path d="M0.5 0.5L4.5 4.5L8.5 0.5" fill="none" stroke="#bbb" stroke-width="1"/></svg>
<div class="a" style="left:865px;top:559px;width:101px;height:20px;background:#222;border-radius:4px;"></div>
<div class="a" style="left:866px;top:560px;width:19px;height:18px;background:#2c2c2c;border-radius:3px;border-top:1px solid #5a5a5a;"></div>
<div class="a" style="left:886px;top:560px;width:19px;height:18px;background:#2c2c2c;border-radius:3px;border-top:1px solid #5a5a5a;"></div>
<div class="a" style="left:906px;top:560px;width:19px;height:18px;background:#2c2c2c;border-radius:3px;border-top:1px solid #5a5a5a;"></div>
<div class="a" style="left:926px;top:560px;width:19px;height:18px;background:#2c2c2c;border-radius:3px;border-top:1px solid #5a5a5a;"></div>
<div class="a" style="left:946px;top:560px;width:19px;height:18px;background:#2c2c2c;border-radius:3px;border-top:1px solid #5a5a5a;"></div>
<svg class="a" style="left:866px;top:560px;" width="19" height="18" viewBox="0 0 19 18"><rect x="4" y="4" width="2" height="10" fill="#cfcfcf"/><path d="M14 4V14L7 9Z" fill="#cfcfcf"/></svg>
<svg class="a" style="left:886px;top:560px;" width="19" height="18" viewBox="0 0 19 18"><rect x="13" y="4" width="2" height="10" fill="#cfcfcf"/><path d="M11 4V14L4 9Z" fill="#cfcfcf"/></svg>
<svg class="a" style="left:906px;top:560px;" width="19" height="18" viewBox="0 0 19 18"><path d="M6 4V14L14 9Z" fill="#cfcfcf"/></svg>
<svg class="a" style="left:926px;top:560px;" width="19" height="18" viewBox="0 0 19 18"><rect x="4" y="4" width="2" height="10" fill="#cfcfcf"/><path d="M8 4V14L15 9Z" fill="#cfcfcf"/></svg>
<svg class="a" style="left:946px;top:560px;" width="19" height="18" viewBox="0 0 19 18"><rect x="13" y="4" width="2" height="10" fill="#cfcfcf"/><path d="M5 4V14L12 9Z" fill="#cfcfcf"/></svg>
<div class="a" style="left:971px;top:559px;width:20px;height:20px;background:#2c2c2c;border-radius:4px;border:1px solid #222;"></div>
<svg class="a" style="left:972px;top:560px;" width="18" height="18" viewBox="0 0 18 18"><path d="M8 6H3V13H15V9" fill="none" stroke="#cfcfcf" stroke-width="1.2"/><path d="M10 3V10L15 6.5Z" fill="#cfcfcf"/></svg>
<div class="a" style="left:1232px;top:559px;width:37px;height:20px;background:#313131;border-radius:4px;border:1px solid #262626;"></div>
<svg class="a" style="left:1234px;top:563px;" width="16" height="12" viewBox="0 0 16 12"><path d="M5 1H15V11H5L0 6Z" fill="#ddd"/><circle cx="5" cy="6" r="1.6" fill="#313131"/></svg>
<div class="t" style="left:1257px;top:563px;color:#cccccc;font-size:12px;">0</div>
<div class="a" style="left:1272px;top:559px;width:31px;height:20px;background:#313131;border-radius:4px;border:1px solid #262626;"></div>
<svg class="a" style="left:1294px;top:564px;" width="8" height="10" viewBox="0 0 8 10"><path d="M1 1L7 5L1 9Z" fill="none" stroke="#999" stroke-width="1"/></svg>
<div class="a" style="left:1307px;top:559px;width:31px;height:20px;background:#313131;border-radius:4px;border:1px solid #262626;"></div>
<svg class="a" style="left:1329px;top:564px;" width="8" height="10" viewBox="0 0 8 10"><path d="M1 1L7 5L1 9Z" fill="none" stroke="#999" stroke-width="1"/></svg>
<div class="a" style="left:1342px;top:559px;width:31px;height:20px;background:#313131;border-radius:4px;border:1px solid #262626;"></div>
<svg class="a" style="left:1364px;top:564px;" width="8" height="10" viewBox="0 0 8 10"><path d="M1 1L7 5L1 9Z" fill="none" stroke="#999" stroke-width="1"/></svg>
<div class="a" style="left:1458px;top:559px;width:31px;height:20px;background:#313131;border-radius:4px;border:1px solid #262626;"></div>
<svg class="a" style="left:1480px;top:564px;" width="8" height="10" viewBox="0 0 8 10"><path d="M1 1L7 5L1 9Z" fill="none" stroke="#999" stroke-width="1"/></svg>
<div class="a" style="left:1493px;top:559px;width:31px;height:20px;background:#313131;border-radius:4px;border:1px solid #262626;"></div>
<svg class="a" style="left:1515px;top:564px;" width="8" height="10" viewBox="0 0 8 10"><path d="M1 1L7 5L1 9Z" fill="none" stroke="#999" stroke-width="1"/></svg>
<div class="a" style="left:1528px;top:559px;width:31px;height:20px;background:#313131;border-radius:4px;border:1px solid #262626;"></div>
<svg class="a" style="left:1550px;top:564px;" width="8" height="10" viewBox="0 0 8 10"><path d="M1 1L7 5L1 9Z" fill="none" stroke="#999" stroke-width="1"/></svg>
<div class="a" style="left:1377px;top:559px;width:21px;height:20px;background:#313131;border-radius:4px;border:1px solid #262626;"></div>
<div class="a" style="left:1400px;top:559px;width:20px;height:20px;background:#313131;border-radius:4px;border:1px solid #262626;"></div>
<div class="a" style="left:1423px;top:559px;width:31px;height:20px;background:#313131;border-radius:4px;border:1px solid #262626;"></div>
<svg class="a" style="left:1445px;top:564px;" width="8" height="10" viewBox="0 0 8 10"><path d="M1 1L7 5L1 9Z" fill="none" stroke="#999" stroke-width="1"/></svg>
<div class="a" style="left:1563px;top:559px;width:20px;height:20px;background:#313131;border-radius:4px;border:1px solid #262626;"></div>
<svg class="a" style="left:1275px;top:561px;" width="16" height="16" viewBox="0 0 16 16"><path d="M1 6H4L8 2V14L4 10H1Z" fill="#2ecc71"/><path d="M10 5Q12 8 10 11M12 3Q15 8 12 13" fill="none" stroke="#2ecc71" stroke-width="1.3"/></svg>
<svg class="a" style="left:1310px;top:561px;" width="16" height="16" viewBox="0 0 16 16"><path d="M3 11V7A5 5 0 0 1 13 7V9" fill="none" stroke="#ddd" stroke-width="2.2"/></svg>
<svg class="a" style="left:1345px;top:561px;" width="16" height="16" viewBox="0 0 16 16"><path d="M5 1V15M11 1V15M1 5H15M1 11H15" stroke="#ddd" stroke-width="1.3"/></svg>
<svg class="a" style="left:1379px;top:561px;" width="17" height="16" viewBox="0 0 17 16"><rect x="1" y="3" width="4" height="3" fill="#2ecc71"/><rect x="1" y="8" width="4" height="6" fill="#2ecc71"/><rect x="7" y="3" width="9" height="5" fill="none" stroke="#2ecc71" stroke-width="1.2"/><rect x="7" y="10" width="9" height="4" fill="#2ecc71"/></svg>
<svg class="a" style="left:1402px;top:562px;" width="17" height="14" viewBox="0 0 17 14"><path d="M1 2L5 7L1 12M6 2L10 7L6 12M11 2L15 7L11 12" fill="none" stroke="#ddd" stroke-width="1.6"/></svg>
<svg class="a" style="left:1426px;top:561px;" width="18" height="16" viewBox="0 0 18 16"><rect x="1" y="2" width="15" height="11" fill="none" stroke="#ddd" stroke-width="1.3"/><rect x="1" y="13" width="15" height="2" fill="#ddd"/></svg>
<svg class="a" style="left:1461px;top:561px;" width="18" height="16" viewBox="0 0 18 16"><rect x="1" y="1" width="10" height="8" fill="none" stroke="#ccc" stroke-width="1.1"/><path d="M3 11H13V3M5 13H15V5" fill="none" stroke="#ccc" stroke-width="1.1"/></svg>
<svg class="a" style="left:1496px;top:561px;" width="18" height="16" viewBox="0 0 18 16"><rect x="1" y="1" width="9" height="9" fill="#bbb"/><rect x="6" y="6" width="10" height="9" fill="#313131" stroke="#ddd" stroke-width="1.2"/></svg>
<svg class="a" style="left:1531px;top:561px;" width="16" height="16" viewBox="0 0 16 16"><rect x="1" y="1" width="3" height="3" fill="#2ecc71"/><rect x="1" y="7" width="3" height="3" fill="#2ecc71"/><rect x="1" y="13" width="3" height="3" fill="#2ecc71"/><rect x="4" y="4" width="3" height="3" fill="#2ecc71"/><rect x="4" y="10" width="3" height="3" fill="#2ecc71"/><rect x="7" y="1" width="3" height="3" fill="#2ecc71"/><rect x="7" y="7" width="3" height="3" fill="#2ecc71"/><rect x="7" y="13" width="3" height="3" fill="#2ecc71"/><rect x="10" y="4" width="3" height="3" fill="#2ecc71"/><rect x="10" y="10" width="3" height="3" fill="#2ecc71"/><rect x="13" y="1" width="3" height="3" fill="#2ecc71"/><rect x="13" y="7" width="3" height="3" fill="#2ecc71"/><rect x="13" y="13" width="3" height="3" fill="#2ecc71"/></svg>
<svg class="a" style="left:1565px;top:561px;" width="16" height="16" viewBox="0 0 16 16"><circle cx="8" cy="8" r="5" fill="none" stroke="#ddd" stroke-width="3.5" stroke-dasharray="2.2 1.7"/><circle cx="8" cy="8" r="4" fill="none" stroke="#ddd" stroke-width="2.2"/></svg>
<div class="a" style="left:1594px;top:85px;width:318px;height:22px;background:#1e1e1e;"></div>
<div class="a" style="left:1594px;top:107px;width:306px;height:378px;background:#474747;"></div>
<div class="a" style="left:1900px;top:107px;width:14px;height:377px;background:#2c2c2c;"></div>
<div class="a" style="left:1903px;top:153px;width:9px;height:302px;background:#4a4a4a;border-radius:4px;"></div>
<div class="a" style="left:1594px;top:107px;width:306px;height:160px;overflow:hidden"><div class="a" style="left:52px;top:-47px;width:200px;height:200px;border-radius:50%;background:conic-gradient(#80ff00 0deg,#ffff00 30deg,#ff0000 90deg,#ff00ff 150deg,#0000ff 210deg,#00ffff 270deg,#00ff00 330deg,#80ff00 360deg)"></div><div class="a" style="left:77px;top:-22px;width:150px;height:150px;border-radius:50%;background:#474747"></div></div>
<div class="a" style="left:1594px;top:85px;width:318px;height:22px;background:#1e1e1e;"></div>
<div class="a" style="left:1594px;top:85px;width:38px;height:22px;background:#474747;border-radius:4px 4px 0 0;"></div>
<div class="t" style="left:1598px;top:89px;color:#e8e8e8;font-size:12px;">Color</div>
<div class="a" style="left:1633px;top:85px;width:69px;height:22px;background:#262626;border-radius:4px 4px 0 0;"></div>
<div class="t" style="left:1639px;top:89px;color:#e8e8e8;font-size:12px;">Add Layers</div>
<div class="a" style="left:1702px;top:116px;width:90px;height:90px;background:linear-gradient(to right,#000,rgba(0,0,0,0)),linear-gradient(to bottom,#fff,#2200ff)"></div>
<div class="a" style="left:1785px;top:169px;width:13px;height:13px;border:1.5px solid #eee;border-radius:50%;"></div>
<div class="a" style="left:1704px;top:233px;width:13px;height:13px;border:1.5px solid #eee;border-radius:50%;"></div>
<div class="a" style="left:1600px;top:273px;width:22px;height:22px;background:#6755ff;border-radius:3px;"></div>
<div class="t" style="left:1625px;top:277px;color:#ececec;font-size:12px;">Medium Slateblue</div>
<div class="a" style="left:1871px;top:273px;width:22px;height:22px;background:#2a2a2a;border-radius:4px;border:1px solid #222;"></div>
<svg class="a" style="left:1875px;top:277px;" width="14" height="14" viewBox="0 0 14 14"><path d="M2 12L8 6M6 4L10 8" stroke="#ccc" stroke-width="1.5" fill="none"/><circle cx="10.5" cy="3.5" r="2.2" fill="#ccc"/></svg>
<div class="a" style="left:1600px;top:300px;width:49px;height:18px;background:#3e3e3e;border-radius:3px;border:1px solid #2e2e2e;"></div>
<div class="t" style="left:1603px;top:302px;color:#e4e4e4;font-size:12px;">Hex</div>
<svg class="a" style="left:1634px;top:306px;" width="9" height="6" viewBox="0 0 9 6"><path d="M0.5 0.5L4.5 4.5L8.5 0.5" fill="none" stroke="#bbb" stroke-width="1"/></svg>
<div class="a" style="left:1653px;top:298px;width:240px;height:22px;background:#2e2e2e;border-radius:3px;"></div>
<div class="t" style="left:1658px;top:302px;color:#666;font-size:11px;">#</div>
<div class="t" style="left:1670px;top:302px;color:#e6e6e6;font-size:12px;">6755ff</div>
<div class="a" style="left:1600px;top:329px;width:236px;height:4px;background:#dcdcdc;border-radius:2px;"></div>
<div class="a" style="left:1828px;top:325px;width:12px;height:12px;background:#7fcfb0;border-radius:50%;border:2px solid #5aa88a;"></div>
<div class="a" style="left:1850px;top:324px;width:43px;height:17px;background:#333;border-radius:3px;"></div>
<div class="t" style="left:1853px;top:326px;color:#666;font-size:12px;">A</div>
<div class="t" style="left:1866px;top:326px;color:#e6e6e6;font-size:12px;">255</div>
<div class="a" style="left:1597px;top:347px;width:300px;height:22px;background:#2a2a2a;"></div>
<div class="a" style="left:1599px;top:349px;width:148px;height:20px;background:#474747;border-radius:3px 3px 0 0;"></div>
<div class="t" style="left:1648px;top:351px;color:#ececec;font-size:12px;">Swatches</div>
<div class="t" style="left:1793px;top:351px;color:#cfcfcf;font-size:12px;">Generator</div>
<div class="a" style="left:1598px;top:371px;width:258px;height:19px;background:#555;border-radius:3px;"></div>
<div class="a" style="left:1600px;top:372px;width:62px;height:17px;background:#2f2f2f;border-radius:3px;"></div>
<svg class="a" style="left:1604px;top:375px;" width="14" height="11" viewBox="0 0 14 11"><path d="M1 0V11M4 0V11M7 0L12 11" stroke="#2ecc71" stroke-width="1.6"/></svg>
<div class="t" style="left:1620px;top:374px;color:#ececec;font-size:12px;">Library</div>
<svg class="a" style="left:1670px;top:375px;" width="12" height="11" viewBox="0 0 12 11"><path d="M0 0H6V2H12V11H0Z" fill="#ccc"/><path d="M2 5H10M2 8H10" stroke="#555" stroke-width="1"/></svg>
<div class="t" style="left:1686px;top:374px;color:#ececec;font-size:12px;">Project</div>
<svg class="a" style="left:1740px;top:374px;" width="9" height="12" viewBox="0 0 9 12"><path d="M0.5 0.5H5.5L8.5 3.5V11.5H0.5Z" fill="none" stroke="#ccc" stroke-width="1"/></svg>
<div class="t" style="left:1751px;top:374px;color:#ececec;font-size:12px;">Scene</div>
<svg class="a" style="left:1800px;top:374px;" width="12" height="12" viewBox="0 0 12 12"><path d="M1 1H11V6L6 11H1Z" fill="none" stroke="#ccc" stroke-width="1.2" stroke-linejoin="round"/></svg>
<div class="t" style="left:1815px;top:374px;color:#ececec;font-size:12px;">Labels</div>
<div class="a" style="left:1859px;top:371px;width:17px;height:18px;background:#2f2f2f;border-radius:3px;"></div>
<svg class="a" style="left:1862px;top:375px;" width="11" height="11" viewBox="0 0 11 11"><rect x="0" y="0" width="4" height="4" fill="#2ecc71"/><rect x="7" y="0" width="4" height="4" fill="#2ecc71"/><rect x="0" y="7" width="4" height="4" fill="#2ecc71"/><rect x="7" y="7" width="4" height="4" fill="#2ecc71"/></svg>
<svg class="a" style="left:1880px;top:375px;" width="12" height="11" viewBox="0 0 12 11"><path d="M0 1H12M0 5.5H12M0 10H12" stroke="#ccc" stroke-width="1.2"/></svg>
<div class="a" style="left:1598px;top:393px;width:275px;height:17px;background:#3c3c3c;border-radius:3px;border:1px solid #2e2e2e;"></div>
<div class="t" style="left:1601px;top:395px;color:#ececec;font-size:12px;">new</div>
<svg class="a" style="left:1859px;top:399px;" width="9" height="6" viewBox="0 0 9 6"><path d="M0.5 0.5L4.5 4.5L8.5 0.5" fill="none" stroke="#bbb" stroke-width="1"/></svg>
<div class="a" style="left:1880px;top:400px;width:2px;height:2px;background:#ccc;"></div>
<div class="a" style="left:1885px;top:400px;width:2px;height:2px;background:#ccc;"></div>
<div class="a" style="left:1890px;top:400px;width:2px;height:2px;background:#ccc;"></div>
<div class="a" style="left:1598px;top:410px;width:299px;height:74px;background:#282828;"></div>
<div class="a" style="left:1600px;top:412px;width:18px;height:18px;background:#8c4bff;border-radius:3px;"></div>
<div class="a" style="left:1622px;top:412px;width:18px;height:18px;background:#4a9eff;border-radius:3px;"></div>
<div class="a" style="left:1644px;top:412px;width:18px;height:18px;background:#ff7247;border-radius:3px;"></div>
<div class="a" style="left:1666px;top:412px;width:18px;height:18px;background:#4ef0a6;border-radius:3px;"></div>
<div class="a" style="left:1688px;top:412px;width:18px;height:18px;background:#ff4d5a;border-radius:3px;"></div>
<div class="a" style="left:1710px;top:412px;width:18px;height:18px;background:#ff4dbd;border-radius:3px;"></div>
<div class="a" style="left:1732px;top:412px;width:18px;height:18px;background:#ffd24d;border-radius:3px;"></div>
<div class="a" style="left:1754px;top:412px;width:18px;height:18px;background:#3f67d8;border-radius:3px;"></div>
<div class="a" style="left:1776px;top:412px;width:18px;height:18px;background:#52dccc;border-radius:3px;"></div>
<div class="a" style="left:1798px;top:412px;width:18px;height:18px;background:#d87fd8;border-radius:3px;"></div>
<div class="a" style="left:1820px;top:412px;width:18px;height:18px;background:#aee88a;border-radius:3px;"></div>
<div class="a" style="left:1842px;top:412px;width:18px;height:18px;background:#6755ff;border-radius:3px;"></div>
<div class="a" style="left:1594px;top:490px;width:320px;height:22px;background:#1e1e1e;"></div>
<div class="a" style="left:1594px;top:490px;width:37px;height:22px;background:#3c3c3c;border-radius:4px 4px 0 0;"></div>
<div class="t" style="left:1600px;top:494px;color:#e8e8e8;font-size:12px;">Align</div>
<div class="a" style="left:1594px;top:512px;width:320px;height:68px;background:#464646;"></div>
<div class="t" style="left:1601px;top:524px;color:#e8e8e8;font-size:12px;">Alignment</div>
<div class="t" style="left:1601px;top:552px;color:#e8e8e8;font-size:12px;">Distribution</div>
<div class="a" style="left:1790px;top:522px;width:54px;height:18px;background:#1f1f1f;border-radius:3px;"></div>
<div class="a" style="left:1791.0px;top:523px;width:17px;height:16px;background:#2e2e2e;border-radius:2px;"></div>
<div class="a" style="left:1808.5px;top:523px;width:17px;height:16px;background:#2e2e2e;border-radius:2px;"></div>
<div class="a" style="left:1826.0px;top:523px;width:17px;height:16px;background:#2e2e2e;border-radius:2px;"></div>
<div class="a" style="left:1852px;top:522px;width:54px;height:18px;background:#1f1f1f;border-radius:3px;"></div>
<div class="a" style="left:1853.0px;top:523px;width:17px;height:16px;background:#2e2e2e;border-radius:2px;"></div>
<div class="a" style="left:1870.5px;top:523px;width:17px;height:16px;background:#2e2e2e;border-radius:2px;"></div>
<div class="a" style="left:1888.0px;top:523px;width:17px;height:16px;background:#2e2e2e;border-radius:2px;"></div>
<div class="a" style="left:1790px;top:550px;width:54px;height:18px;background:#1f1f1f;border-radius:3px;"></div>
<div class="a" style="left:1791.0px;top:551px;width:17px;height:16px;background:#2e2e2e;border-radius:2px;"></div>
<div class="a" style="left:1808.5px;top:551px;width:17px;height:16px;background:#2e2e2e;border-radius:2px;"></div>
<div class="a" style="left:1826.0px;top:551px;width:17px;height:16px;background:#2e2e2e;border-radius:2px;"></div>
<svg class="a" style="left:1791px;top:523px;" width="54" height="16" viewBox="0 0 54 16"><path d="M4 2V14M6 5H12M6 11H12M22 2V14M17 6H27M17 10H27M40 2V14M32 5H38M32 11H38" stroke="#ddd" stroke-width="1.3"/></svg>
<svg class="a" style="left:1853px;top:523px;" width="54" height="16" viewBox="0 0 54 16"><path d="M3 3H14M7 4V14M11 4V11M27 2V14M21 5V12M25 5V12M21 8H33M30 5V12M40 13H51M44 3V12M48 6V12" stroke="#ddd" stroke-width="1.3"/></svg>
<svg class="a" style="left:1791px;top:551px;" width="54" height="16" viewBox="0 0 54 16"><path d="M3 2V14M9 2V14M6 4V12M22 4H32M22 8H32M22 12H32M39 12L41 10M44 7L46 5M50 3V13" stroke="#ddd" stroke-width="1.3"/></svg>
<div class="a" style="left:494px;top:586px;width:1418px;height:22px;background:#1e1e1e;"></div>
<div class="a" style="left:494px;top:586px;width:89px;height:22px;background:#3c3c3c;border-radius:4px 4px 0 0;"></div>
<div class="t" style="left:499px;top:590px;color:#e8e8e8;font-size:12px;">Scene Window</div>
<div class="a" style="left:584px;top:586px;width:100px;height:22px;background:#252525;border-radius:4px 4px 0 0;"></div>
<div class="t" style="left:589px;top:590px;color:#e8e8e8;font-size:12px;">JavaScript Editor</div>
<div class="a" style="left:685px;top:586px;width:115px;height:22px;background:#252525;border-radius:4px 4px 0 0;"></div>
<div class="t" style="left:690px;top:590px;color:#e8e8e8;font-size:12px;">Dependency Graph</div>
<div class="a" style="left:494px;top:608px;width:1418px;height:2px;background:#2fc46a;"></div>
<div class="a" style="left:494px;top:610px;width:1418px;height:390px;background:#2b2b2b;"></div>
<div class="a" style="left:494px;top:610px;width:1418px;height:21px;background:#282828;"></div>
<div class="a" style="left:1557px;top:611px;width:352px;height:20px;background:#3c3c3c;border-radius:4px 4px 0 0;"></div>
<div class="t" style="left:627px;top:612px;color:#c8c8c8;font-size:12px;">Composition 1</div>
<div class="t" style="left:979px;top:612px;color:#c8c8c8;font-size:12px;">Composition 2</div>
<div class="t" style="left:1332px;top:612px;color:#c8c8c8;font-size:12px;">Composition 3</div>
<div class="t" style="left:1684px;top:612px;color:#ececec;font-size:12px;">Composition 4</div>
<svg class="a" style="left:834px;top:615px;" width="11" height="11" viewBox="0 0 11 11"><path d="M1 1L10 10M10 1L1 10" stroke="#aaa" stroke-width="1"/></svg>
<svg class="a" style="left:1185px;top:615px;" width="11" height="11" viewBox="0 0 11 11"><path d="M1 1L10 10M10 1L1 10" stroke="#aaa" stroke-width="1"/></svg>
<svg class="a" style="left:1538px;top:615px;" width="11" height="11" viewBox="0 0 11 11"><path d="M1 1L10 10M10 1L1 10" stroke="#aaa" stroke-width="1"/></svg>
<svg class="a" style="left:1891px;top:615px;" width="11" height="11" viewBox="0 0 11 11"><path d="M1 1L10 10M10 1L1 10" stroke="#aaa" stroke-width="1"/></svg>
<div class="a" style="left:852px;top:614px;width:1px;height:13px;background:#999;"></div>
<div class="a" style="left:1204px;top:614px;width:1px;height:13px;background:#999;"></div>
<div class="a" style="left:494px;top:631px;width:465px;height:21px;background:#464646;"></div>
<div class="a" style="left:496px;top:632px;width:255px;height:20px;background:#2a2a2a;border-radius:10px;"></div>
<svg class="a" style="left:500px;top:635px;" width="14" height="14" viewBox="0 0 14 14"><circle cx="5.5" cy="5.5" r="4.3" fill="none" stroke="#ddd" stroke-width="1.3"/><path d="M8.7 8.7L12.5 12.5" stroke="#ddd" stroke-width="2"/></svg>
<div class="t" style="left:520px;top:635px;color:#9a9a9a;font-size:12px;">Enter a layer name</div>
<div class="a" style="left:753px;top:632px;width:20px;height:20px;background:#2e2e2e;border-radius:3px;border:1px solid #222;"></div>
<svg class="a" style="left:756px;top:635px;" width="14" height="14" viewBox="0 0 14 14"><path d="M7 2V12M2 7H12" stroke="#eee" stroke-width="2"/></svg>
<div class="a" style="left:797px;top:632px;width:20px;height:20px;background:#2e2e2e;border-radius:3px;border:1px solid #222;"></div>
<div class="a" style="left:819px;top:632px;width:20px;height:20px;background:#2e2e2e;border-radius:3px;border:1px solid #222;"></div>
<div class="a" style="left:841px;top:632px;width:20px;height:20px;background:#2e2e2e;border-radius:3px;border:1px solid #222;"></div>
<svg class="a" style="left:799px;top:634px;" width="16" height="16" viewBox="0 0 16 16"><circle cx="10" cy="6" r="4" fill="#ddd"/><path d="M4 12A5 5 0 0 1 6 5M3 10A6 6 0 0 1 4 6" stroke="#777" stroke-width="1.3" fill="none"/></svg>
<svg class="a" style="left:821px;top:634px;" width="16" height="16" viewBox="0 0 16 16"><circle cx="4" cy="3" r="1" fill="#ddd"/><circle cx="10" cy="3" r="1" fill="#ddd"/><circle cx="4" cy="9" r="1" fill="#ddd"/><path d="M11 6V14M7 10H15" stroke="#ddd" stroke-width="2"/></svg>
<svg class="a" style="left:843px;top:634px;" width="16" height="16" viewBox="0 0 16 16"><path d="M1 3H14M1 8H14M1 13H14" stroke="#ddd" stroke-width="1" stroke-dasharray="2 1"/><circle cx="7" cy="3" r="1.6" fill="#2e2e2e" stroke="#ddd"/><circle cx="9" cy="8" r="1.6" fill="#2e2e2e" stroke="#ddd"/><circle cx="7" cy="13" r="1.6" fill="#2e2e2e" stroke="#ddd"/></svg>
<div class="a" style="left:863px;top:632px;width:94px;height:19px;background:#2b2b2b;border-radius:3px;"></div>
<div class="t" style="left:868px;top:634px;color:#5a5a5a;font-size:12px;">F</div>
<div class="t" style="left:880px;top:634px;color:#e6e6e6;font-size:12px;">41</div>
<div class="a" style="left:494px;top:652px;width:465px;height:21px;background:#3e3e3e;"></div>
<svg class="a" style="left:499px;top:656px;" width="12" height="13" viewBox="0 0 12 13"><path d="M3 6V4A3 3 0 0 1 9 4V6" fill="none" stroke="#cfcfcf" stroke-width="1.5"/><rect x="1.5" y="6" width="9" height="6.5" fill="#cfcfcf"/><rect x="5" y="8.5" width="2" height="2" fill="#3e3e3e"/></svg>
<svg class="a" style="left:516px;top:657px;" width="15" height="10" viewBox="0 0 15 10"><path d="M1 5Q7.5 -1 14 5Q7.5 11 1 5Z" fill="none" stroke="#cfcfcf" stroke-width="1.1"/><circle cx="7.5" cy="5" r="1.8" fill="#cfcfcf"/></svg>
<svg class="a" style="left:536px;top:655px;" width="14" height="15" viewBox="0 0 14 15"><path d="M7 1L13 4V11L7 14L1 11V4Z M1 4L7 7L13 4M7 7V14" fill="none" stroke="#cfcfcf" stroke-width="1.1"/></svg>
<svg class="a" style="left:555px;top:656px;" width="15" height="13" viewBox="0 0 15 13"><path d="M1 4H4L8 1V12L4 9H1Z" fill="#cfcfcf"/><path d="M10 3Q12 6.5 10 10M12 1Q15 6.5 12 12" fill="none" stroke="#cfcfcf" stroke-width="1.1"/></svg>
<svg class="a" style="left:575px;top:655px;" width="13" height="14" viewBox="0 0 13 14"><path d="M1 13L8 5M6 3L10 7" stroke="#bbb" stroke-width="1.4" fill="none"/><circle cx="10" cy="3.5" r="2.2" fill="#bbb"/></svg>
<svg class="a" style="left:593px;top:657px;" width="15" height="10" viewBox="0 0 15 10"><path d="M4 0H15V10H4L0 5Z" fill="#cfcfcf"/><circle cx="5" cy="5" r="1.5" fill="#3e3e3e"/></svg>
<div class="t" style="left:649px;top:657px;color:#ececec;font-size:12px;">Name</div>
<div class="a" style="left:495px;top:673px;width:452px;height:22px;background:#393939;"></div>
<div class="a" style="left:496px;top:675px;width:18px;height:19px;background:#2a2a2a;border-radius:3px;"></div>
<div class="a" style="left:515px;top:675px;width:18px;height:19px;background:#2a2a2a;border-radius:3px;"></div>
<svg class="a" style="left:516px;top:675px;" width="16" height="16" viewBox="0 0 16 16"><circle cx="8" cy="8.5" r="4.6" fill="none" stroke="#dcdcdc" stroke-width="1.1"/><path d="M5.5 8L8 10.5L12.5 5" fill="none" stroke="#dcdcdc" stroke-width="1.5"/></svg>
<div class="a" style="left:572px;top:674px;width:18px;height:18px;background:#72dd98;border-radius:3px;border:1px solid #222;"></div>
<svg class="a" style="left:593px;top:678px;" width="15" height="10" viewBox="0 0 15 10"><path d="M4 0H15V10H4L0 5Z" fill="#d6d6d6"/><circle cx="5" cy="5" r="1.5" fill="#393939"/></svg>
<div class="a" style="left:610px;top:675px;width:32px;height:16px;background:#2f2f2f;border-radius:3px;"></div>
<div class="a" style="left:610px;top:675px;width:15px;height:16px;background:#333;border-radius:3px;"></div>
<svg class="a" style="left:613px;top:681px;" width="9" height="6" viewBox="0 0 9 6"><path d="M0.5 0.5L4.5 4.5L8.5 0.5" fill="none" stroke="#888" stroke-width="1"/></svg>
<svg class="a" style="left:648px;top:676px;" width="16" height="16" viewBox="0 0 16 16"><rect x="1" y="7" width="9" height="8" fill="#a7cdf5"/><rect x="5" y="4" width="5" height="4" fill="#a7cdf5"/><path d="M7 1.5H15M7.5 4.5H15M10.5 7.5H15" stroke="#ddd" stroke-width="1"/></svg>
<div class="t" style="left:667px;top:676px;color:#ececec;font-size:12px;">Color Array</div>
<div class="a" style="left:905px;top:675px;width:10px;height:15px;background:#303030;border-radius:3px;"></div>
<div class="a" style="left:916px;top:675px;width:10px;height:15px;background:#303030;border-radius:3px;"></div>
<svg class="a" style="left:905px;top:675px;" width="21" height="15" viewBox="0 0 21 15"><path d="M8 5V11H4.5L2 8L4.5 5Z" fill="#857a50"/><path d="M13 5H16.5L19 8L16.5 11H13Z" fill="#7f4a9e"/></svg>
<svg class="a" style="left:930px;top:677px;" width="12" height="12" viewBox="0 0 12 12"><circle cx="6" cy="6" r="4.3" fill="none" stroke="#707070" stroke-width="1.3"/></svg>
<div class="a" style="left:495px;top:695px;width:452px;height:22px;background:#393939;"></div>
<div class="a" style="left:496px;top:697px;width:18px;height:19px;background:#2a2a2a;border-radius:3px;"></div>
<div class="a" style="left:515px;top:697px;width:18px;height:19px;background:#2a2a2a;border-radius:3px;"></div>
<svg class="a" style="left:516px;top:697px;" width="16" height="16" viewBox="0 0 16 16"><circle cx="8" cy="8.5" r="4.6" fill="none" stroke="#dcdcdc" stroke-width="1.1"/><path d="M5.5 8L8 10.5L12.5 5" fill="none" stroke="#dcdcdc" stroke-width="1.5"/></svg>
<div class="a" style="left:572px;top:696px;width:18px;height:18px;background:#c9ef7c;border-radius:3px;border:1px solid #222;"></div>
<svg class="a" style="left:593px;top:700px;" width="15" height="10" viewBox="0 0 15 10"><path d="M4 0H15V10H4L0 5Z" fill="#d6d6d6"/><circle cx="5" cy="5" r="1.5" fill="#393939"/></svg>
<svg class="a" style="left:667px;top:698px;" width="16" height="16" viewBox="0 0 16 16"><path d="M1 1L4 4M4 1L1 4M12 1.5H14.5V4H12ZM2 11L5 14M5 11L2 14M11 11L15 15M15 11L11 15" stroke="#7ad38a" stroke-width="1"/><rect x="6.5" y="6.5" width="2.5" height="2.5" fill="#7ad38a"/></svg>
<div class="t" style="left:686px;top:698px;color:#ececec;font-size:12px;">Random [Index]</div>
<div class="a" style="left:905px;top:697px;width:10px;height:15px;background:#303030;border-radius:3px;"></div>
<div class="a" style="left:916px;top:697px;width:10px;height:15px;background:#303030;border-radius:3px;"></div>
<svg class="a" style="left:905px;top:697px;" width="21" height="15" viewBox="0 0 21 15"><path d="M8 5V11H4.5L2 8L4.5 5Z" fill="#575757"/><path d="M13 5H16.5L19 8L16.5 11H13Z" fill="#7f4a9e"/></svg>
<svg class="a" style="left:930px;top:699px;" width="12" height="12" viewBox="0 0 12 12"><circle cx="6" cy="6" r="4.3" fill="none" stroke="#707070" stroke-width="1.3"/></svg>
<div class="a" style="left:495px;top:717px;width:452px;height:22px;background:#393939;"></div>
<div class="a" style="left:496px;top:719px;width:18px;height:19px;background:#2a2a2a;border-radius:3px;"></div>
<div class="a" style="left:515px;top:719px;width:18px;height:19px;background:#2a2a2a;border-radius:3px;"></div>
<svg class="a" style="left:516px;top:719px;" width="16" height="16" viewBox="0 0 16 16"><circle cx="8" cy="8.5" r="4.6" fill="none" stroke="#dcdcdc" stroke-width="1.1"/><path d="M5.5 8L8 10.5L12.5 5" fill="none" stroke="#dcdcdc" stroke-width="1.5"/></svg>
<div class="a" style="left:572px;top:718px;width:18px;height:18px;background:#c9ef7c;border-radius:3px;border:1px solid #222;"></div>
<svg class="a" style="left:593px;top:722px;" width="15" height="10" viewBox="0 0 15 10"><path d="M4 0H15V10H4L0 5Z" fill="#d6d6d6"/><circle cx="5" cy="5" r="1.5" fill="#393939"/></svg>
<svg class="a" style="left:647px;top:721px;" width="18" height="12" viewBox="0 0 18 12"><path d="M1 7C2.5 -1 4.5 -1 6 6S9.5 13 11 6S14.5 -1 16.5 6" fill="none" stroke="#7ad38a" stroke-width="1.1"/></svg>
<div class="t" style="left:667px;top:720px;color:#ececec;font-size:12px;">Oscillator [Position.Z] Cosine</div>
<div class="a" style="left:905px;top:719px;width:10px;height:15px;background:#303030;border-radius:3px;"></div>
<div class="a" style="left:916px;top:719px;width:10px;height:15px;background:#303030;border-radius:3px;"></div>
<svg class="a" style="left:905px;top:719px;" width="21" height="15" viewBox="0 0 21 15"><path d="M8 5V11H4.5L2 8L4.5 5Z" fill="#e2c47a"/><path d="M13 5H16.5L19 8L16.5 11H13Z" fill="#d55cf0"/></svg>
<svg class="a" style="left:930px;top:721px;" width="12" height="12" viewBox="0 0 12 12"><circle cx="6" cy="6" r="4.3" fill="none" stroke="#707070" stroke-width="1.3"/></svg>
<div class="a" style="left:495px;top:739px;width:448px;height:21px;background:#4d5146;border-radius:3px;"></div>
<div class="a" style="left:496px;top:741px;width:18px;height:19px;background:#474a42;border-radius:3px;"></div>
<div class="a" style="left:515px;top:741px;width:18px;height:19px;background:#474a42;border-radius:3px;"></div>
<svg class="a" style="left:516px;top:741px;" width="16" height="16" viewBox="0 0 16 16"><circle cx="8" cy="8.5" r="4.6" fill="none" stroke="#9a9a9a" stroke-width="1.1"/><path d="M5.5 8L8 10.5L12.5 5" fill="none" stroke="#9a9a9a" stroke-width="1.5"/></svg>
<div class="a" style="left:572px;top:740px;width:18px;height:18px;background:#8fa067;border-radius:3px;border:1px solid #222;"></div>
<svg class="a" style="left:593px;top:744px;" width="15" height="10" viewBox="0 0 15 10"><path d="M4 0H15V10H4L0 5Z" fill="#888"/><circle cx="5" cy="5" r="1.5" fill="#4d5146"/></svg>
<svg class="a" style="left:647px;top:743px;" width="18" height="12" viewBox="0 0 18 12"><path d="M1 7C2.5 -1 4.5 -1 6 6S9.5 13 11 6S14.5 -1 16.5 6" fill="none" stroke="#7ad38a" stroke-width="1.1"/></svg>
<div class="t" style="left:667px;top:742px;color:#7a7a7a;font-size:12px;text-decoration:line-through;">Oscillator [Position.X] Sine</div>
<div class="a" style="left:905px;top:741px;width:10px;height:15px;background:#262626;border-radius:3px;"></div>
<div class="a" style="left:916px;top:741px;width:10px;height:15px;background:#262626;border-radius:3px;"></div>
<svg class="a" style="left:905px;top:741px;" width="21" height="15" viewBox="0 0 21 15"><path d="M8 5V11H4.5L2 8L4.5 5Z" fill="#e2c47a"/><path d="M13 5H16.5L19 8L16.5 11H13Z" fill="#d55cf0"/></svg>
<svg class="a" style="left:930px;top:743px;" width="12" height="12" viewBox="0 0 12 12"><circle cx="6" cy="6" r="4.3" fill="none" stroke="#707070" stroke-width="1.3"/></svg>
<div class="a" style="left:495px;top:761px;width:448px;height:21px;background:#494c3f;border-radius:3px;"></div>
<div class="a" style="left:496px;top:763px;width:18px;height:19px;background:#2a2a2a;border-radius:3px;"></div>
<div class="a" style="left:515px;top:763px;width:18px;height:19px;background:#2a2a2a;border-radius:3px;"></div>
<svg class="a" style="left:516px;top:763px;" width="16" height="16" viewBox="0 0 16 16"><circle cx="8" cy="8.5" r="4.6" fill="none" stroke="#dcdcdc" stroke-width="1.1"/><path d="M5.5 8L8 10.5L12.5 5" fill="none" stroke="#dcdcdc" stroke-width="1.5"/></svg>
<div class="a" style="left:572px;top:762px;width:18px;height:18px;background:#c9ef7c;border-radius:3px;border:1px solid #222;"></div>
<svg class="a" style="left:593px;top:766px;" width="15" height="10" viewBox="0 0 15 10"><path d="M4 0H15V10H4L0 5Z" fill="#d6d6d6"/><circle cx="5" cy="5" r="1.5" fill="#494c3f"/></svg>
<svg class="a" style="left:648px;top:764px;" width="17" height="17" viewBox="0 0 17 17"><path d="M3 2V15H16" fill="none" stroke="#ddd" stroke-width="1.1"/><path d="M3 15L11 7" stroke="#ddd" stroke-width="1"/><path d="M1 4L3 1.5L5 4M14 13L16.5 15L14 17M8 7H11V10" fill="none" stroke="#6fcf7a" stroke-width="1"/></svg>
<div class="t" style="left:667px;top:764px;color:#ececec;font-size:12px;">3D Matrix [Duplicator]</div>
<div class="a" style="left:905px;top:763px;width:10px;height:15px;background:#42453a;border-radius:3px;"></div>
<div class="a" style="left:916px;top:763px;width:10px;height:15px;background:#42453a;border-radius:3px;"></div>
<svg class="a" style="left:905px;top:763px;" width="21" height="15" viewBox="0 0 21 15"><path d="M8 5V11H4.5L2 8L4.5 5Z" fill="#575757"/><path d="M13 5H16.5L19 8L16.5 11H13Z" fill="#7f4a9e"/></svg>
<svg class="a" style="left:930px;top:765px;" width="12" height="12" viewBox="0 0 12 12"><circle cx="6" cy="6" r="4.3" fill="none" stroke="#707070" stroke-width="1.3"/></svg>
<div class="a" style="left:495px;top:783px;width:452px;height:22px;background:#393939;"></div>
<div class="a" style="left:496px;top:785px;width:18px;height:19px;background:#2a2a2a;border-radius:3px;"></div>
<div class="a" style="left:515px;top:785px;width:18px;height:19px;background:#2a2a2a;border-radius:3px;"></div>
<div class="a" style="left:534px;top:785px;width:18px;height:19px;background:#2a2a2a;border-radius:3px;"></div>
<svg class="a" style="left:516px;top:788px;" width="16" height="12" viewBox="0 0 16 12"><path d="M1.5 6Q8 0 14.5 6Q8 12 1.5 6Z" fill="none" stroke="#dcdcdc" stroke-width="1.1"/><circle cx="8" cy="6" r="2" fill="#dcdcdc"/></svg>
<div class="a" style="left:572px;top:784px;width:18px;height:18px;background:#ffe47c;border-radius:3px;border:1px solid #222;"></div>
<svg class="a" style="left:593px;top:788px;" width="15" height="10" viewBox="0 0 15 10"><path d="M4 0H15V10H4L0 5Z" fill="#d6d6d6"/><circle cx="5" cy="5" r="1.5" fill="#393939"/></svg>
<svg class="a" style="left:648px;top:787px;" width="16" height="16" viewBox="0 0 16 16"><rect x="1" y="1" width="2.2" height="2.2" fill="#e8d77a"/><rect x="1" y="6" width="2.2" height="2.2" fill="#e8d77a"/><rect x="1" y="11" width="2.2" height="2.2" fill="#e8d77a"/><rect x="6" y="1" width="2.2" height="2.2" fill="#e8d77a"/><rect x="6" y="6" width="2.2" height="2.2" fill="#e8d77a"/><rect x="6" y="11" width="2.2" height="2.2" fill="#e8d77a"/><rect x="11" y="1" width="2.2" height="2.2" fill="#e8d77a"/><rect x="11" y="6" width="2.2" height="2.2" fill="#e8d77a"/><rect x="11" y="11" width="2.2" height="2.2" fill="#e8d77a"/></svg>
<div class="t" style="left:667px;top:786px;color:#ececec;font-size:12px;">Duplicator</div>
<div class="a" style="left:905px;top:785px;width:10px;height:15px;background:#303030;border-radius:3px;"></div>
<div class="a" style="left:916px;top:785px;width:10px;height:15px;background:#303030;border-radius:3px;"></div>
<div class="a" style="left:905px;top:785px;width:10px;height:15px;border:1px solid #857a50;border-radius:3px;"></div>
<svg class="a" style="left:905px;top:785px;" width="21" height="15" viewBox="0 0 21 15"><path d="M8 5V11H4.5L2 8L4.5 5Z" fill="#857a50"/><path d="M13 5H16.5L19 8L16.5 11H13Z" fill="#575757"/></svg>
<svg class="a" style="left:930px;top:787px;" width="12" height="12" viewBox="0 0 12 12"><circle cx="6" cy="6" r="4.3" fill="none" stroke="#707070" stroke-width="1.3"/></svg>
<div class="a" style="left:495px;top:805px;width:452px;height:22px;background:#393939;"></div>
<div class="a" style="left:496px;top:807px;width:18px;height:19px;background:#2a2a2a;border-radius:3px;"></div>
<div class="a" style="left:515px;top:807px;width:18px;height:19px;background:#2a2a2a;border-radius:3px;"></div>
<div class="a" style="left:534px;top:807px;width:18px;height:19px;background:#2a2a2a;border-radius:3px;"></div>
<div class="a" style="left:572px;top:806px;width:18px;height:18px;background:#ffe47c;border-radius:3px;border:1px solid #222;"></div>
<svg class="a" style="left:593px;top:810px;" width="15" height="10" viewBox="0 0 15 10"><path d="M4 0H15V10H4L0 5Z" fill="#d6d6d6"/><circle cx="5" cy="5" r="1.5" fill="#393939"/></svg>
<div class="a" style="left:610px;top:807px;width:32px;height:16px;background:#2f2f2f;border-radius:3px;"></div>
<div class="a" style="left:610px;top:807px;width:15px;height:16px;background:#333;border-radius:3px;"></div>
<svg class="a" style="left:613px;top:813px;" width="9" height="6" viewBox="0 0 9 6"><path d="M0.5 0.5L4.5 4.5L8.5 0.5" fill="none" stroke="#888" stroke-width="1"/></svg>
<svg class="a" style="left:648px;top:809px;" width="16" height="16" viewBox="0 0 16 16"><rect x="2" y="2" width="12" height="12" fill="none" stroke="#ddd" stroke-width="1.1" stroke-dasharray="3 2"/></svg>
<div class="t" style="left:667px;top:808px;color:#ececec;font-size:12px;">Ellipse Shape</div>
<div class="a" style="left:905px;top:807px;width:10px;height:15px;background:#303030;border-radius:3px;"></div>
<div class="a" style="left:916px;top:807px;width:10px;height:15px;background:#303030;border-radius:3px;"></div>
<svg class="a" style="left:905px;top:807px;" width="21" height="15" viewBox="0 0 21 15"><path d="M8 5V11H4.5L2 8L4.5 5Z" fill="#857a50"/><path d="M13 5H16.5L19 8L16.5 11H13Z" fill="#7f4a9e"/></svg>
<svg class="a" style="left:930px;top:809px;" width="12" height="12" viewBox="0 0 12 12"><circle cx="6" cy="6" r="4.3" fill="none" stroke="#707070" stroke-width="1.3"/></svg>
<div class="a" style="left:495px;top:827px;width:452px;height:22px;background:#393939;"></div>
<div class="a" style="left:496px;top:829px;width:18px;height:19px;background:#2a2a2a;border-radius:3px;"></div>
<div class="a" style="left:515px;top:829px;width:18px;height:19px;background:#2a2a2a;border-radius:3px;"></div>
<svg class="a" style="left:516px;top:829px;" width="16" height="16" viewBox="0 0 16 16"><circle cx="8" cy="8.5" r="4.6" fill="none" stroke="#dcdcdc" stroke-width="1.1"/><path d="M5.5 8L8 10.5L12.5 5" fill="none" stroke="#dcdcdc" stroke-width="1.5"/></svg>
<div class="a" style="left:572px;top:828px;width:18px;height:18px;background:#6a8fe8;border-radius:3px;border:1px solid #222;"></div>
<svg class="a" style="left:593px;top:832px;" width="15" height="10" viewBox="0 0 15 10"><path d="M4 0H15V10H4L0 5Z" fill="#d6d6d6"/><circle cx="5" cy="5" r="1.5" fill="#393939"/></svg>
<svg class="a" style="left:667px;top:830px;" width="16" height="17" viewBox="0 0 16 17"><rect x="1" y="5" width="10" height="11" fill="#a7cdf5"/><path d="M5 8H7V14" stroke="#333" stroke-width="1.5" fill="none"/><path d="M13 0V5M10.5 2.5H15.5" stroke="#ddd" stroke-width="1.1"/></svg>
<div class="t" style="left:686px;top:830px;color:#ececec;font-size:12px;">Index Context [Number]</div>
<div class="a" style="left:905px;top:829px;width:10px;height:15px;background:#303030;border-radius:3px;"></div>
<div class="a" style="left:916px;top:829px;width:10px;height:15px;background:#303030;border-radius:3px;"></div>
<svg class="a" style="left:905px;top:829px;" width="21" height="15" viewBox="0 0 21 15"><path d="M8 5V11H4.5L2 8L4.5 5Z" fill="#575757"/><path d="M13 5H16.5L19 8L16.5 11H13Z" fill="#7f4a9e"/></svg>
<svg class="a" style="left:930px;top:831px;" width="12" height="12" viewBox="0 0 12 12"><circle cx="6" cy="6" r="4.3" fill="none" stroke="#707070" stroke-width="1.3"/></svg>
<div class="a" style="left:495px;top:849px;width:452px;height:22px;background:#393939;"></div>
<div class="a" style="left:496px;top:851px;width:18px;height:19px;background:#2a2a2a;border-radius:3px;"></div>
<div class="a" style="left:515px;top:851px;width:18px;height:19px;background:#2a2a2a;border-radius:3px;"></div>
<svg class="a" style="left:516px;top:851px;" width="16" height="16" viewBox="0 0 16 16"><circle cx="8" cy="8.5" r="4.6" fill="none" stroke="#dcdcdc" stroke-width="1.1"/><path d="M5.5 8L8 10.5L12.5 5" fill="none" stroke="#dcdcdc" stroke-width="1.5"/></svg>
<div class="a" style="left:572px;top:850px;width:18px;height:18px;background:#6a8fe8;border-radius:3px;border:1px solid #222;"></div>
<svg class="a" style="left:593px;top:854px;" width="15" height="10" viewBox="0 0 15 10"><path d="M4 0H15V10H4L0 5Z" fill="#d6d6d6"/><circle cx="5" cy="5" r="1.5" fill="#393939"/></svg>
<svg class="a" style="left:667px;top:853px;" width="16" height="16" viewBox="0 0 16 16"><path d="M1 13H15M1 10H4M6 10H9M11 10H15" stroke="#ccc" stroke-width="1.1"/><path d="M2 3V8M2 6H4V8M7 3V8M7 6H9V8H7M14 6H12V8H14" fill="none" stroke="#ccc" stroke-width="0.9"/></svg>
<div class="t" style="left:686px;top:852px;color:#ececec;font-size:12px;">String Generator [String]</div>
<div class="a" style="left:905px;top:851px;width:10px;height:15px;background:#303030;border-radius:3px;"></div>
<div class="a" style="left:916px;top:851px;width:10px;height:15px;background:#303030;border-radius:3px;"></div>
<svg class="a" style="left:905px;top:851px;" width="21" height="15" viewBox="0 0 21 15"><path d="M8 5V11H4.5L2 8L4.5 5Z" fill="#857a50"/><path d="M13 5H16.5L19 8L16.5 11H13Z" fill="#7f4a9e"/></svg>
<svg class="a" style="left:930px;top:853px;" width="12" height="12" viewBox="0 0 12 12"><circle cx="6" cy="6" r="4.3" fill="none" stroke="#707070" stroke-width="1.3"/></svg>
<div class="a" style="left:495px;top:871px;width:452px;height:22px;background:#393939;"></div>
<div class="a" style="left:496px;top:873px;width:18px;height:19px;background:#2a2a2a;border-radius:3px;"></div>
<div class="a" style="left:515px;top:873px;width:18px;height:19px;background:#2a2a2a;border-radius:3px;"></div>
<div class="a" style="left:534px;top:873px;width:18px;height:19px;background:#2a2a2a;border-radius:3px;"></div>
<svg class="a" style="left:516px;top:876px;" width="16" height="12" viewBox="0 0 16 12"><path d="M1.5 6Q8 0 14.5 6Q8 12 1.5 6Z" fill="none" stroke="#555" stroke-width="1.1"/><circle cx="8" cy="6" r="2" fill="#555"/></svg>
<div class="a" style="left:572px;top:872px;width:18px;height:18px;background:#b893f2;border-radius:3px;border:1px solid #222;"></div>
<svg class="a" style="left:593px;top:876px;" width="15" height="10" viewBox="0 0 15 10"><path d="M4 0H15V10H4L0 5Z" fill="#d6d6d6"/><circle cx="5" cy="5" r="1.5" fill="#393939"/></svg>
<svg class="a" style="left:667px;top:874px;" width="17" height="17" viewBox="0 0 17 17"><rect x="1" y="1" width="15" height="15" fill="none" stroke="#ddd" stroke-width="1" stroke-dasharray="3 2"/><path d="M4 4H13V7H10V14H7V7H4Z" fill="#e8d77a"/></svg>
<div class="t" style="left:686px;top:874px;color:#ececec;font-size:12px;">Cavalry</div>
<div class="a" style="left:905px;top:873px;width:10px;height:15px;background:#303030;border-radius:3px;"></div>
<div class="a" style="left:916px;top:873px;width:10px;height:15px;background:#303030;border-radius:3px;"></div>
<svg class="a" style="left:905px;top:873px;" width="21" height="15" viewBox="0 0 21 15"><path d="M8 5V11H4.5L2 8L4.5 5Z" fill="#857a50"/><path d="M13 5H16.5L19 8L16.5 11H13Z" fill="#575757"/></svg>
<svg class="a" style="left:930px;top:875px;" width="12" height="12" viewBox="0 0 12 12"><circle cx="6" cy="6" r="4.3" fill="none" stroke="#707070" stroke-width="1.3"/></svg>
<svg class="a" style="left:886px;top:744px;" width="12" height="12" viewBox="0 0 12 12"><circle cx="6" cy="6" r="4" fill="none" stroke="#666" stroke-width="1"/><path d="M3 9L9 3" stroke="#666"/></svg>
<div class="a" style="left:947px;top:673px;width:10px;height:288px;background:#4a4a4a;border-radius:5px;"></div>
<div class="a" style="left:495px;top:965px;width:450px;height:9px;background:#4a4a4a;border-radius:4px;"></div>
<div class="a" style="left:947px;top:964px;width:11px;height:11px;background:#252525;"></div>
<div class="a" style="left:494px;top:976px;width:465px;height:22px;background:#3a3a3a;"></div>
<div class="a" style="left:497px;top:978px;width:19px;height:19px;background:#2e2e2e;border-radius:3px;border:1px solid #222;"></div>
<svg class="a" style="left:500px;top:982px;" width="14" height="10" viewBox="0 0 14 10"><path d="M4 0H14V10H4L0 5Z" fill="#ccc"/><circle cx="5" cy="5" r="1.4" fill="#2e2e2e"/></svg>
<div class="t" style="left:519px;top:980px;color:#e6e6e6;font-size:12px;">1 selected</div>
<div class="a" style="left:750px;top:978px;width:19px;height:19px;background:#2e2e2e;border-radius:3px;border:1px solid #222;"></div>
<svg class="a" style="left:753px;top:981px;" width="13" height="13" viewBox="0 0 13 13"><rect x="1" y="1" width="11" height="11" fill="none" stroke="#ccc" stroke-width="1.2"/><rect x="5" y="5" width="3" height="3" fill="#ccc"/></svg>
<div class="a" style="left:772px;top:978px;width:184px;height:19px;background:#555;border-radius:3px;"></div>
<div class="a" style="left:774px;top:979px;width:87px;height:17px;background:#2c2c2c;border-radius:3px;"></div>
<svg class="a" style="left:779px;top:981px;" width="14" height="13" viewBox="0 0 14 13"><path d="M1 2H13M4 6.5H13M1 11H13" stroke="#2ecc71" stroke-width="2"/></svg>
<div class="t" style="left:796px;top:980px;color:#ececec;font-size:12px;">Time Editor</div>
<svg class="a" style="left:867px;top:980px;" width="14" height="14" viewBox="0 0 14 14"><path d="M1 0V13H14" fill="none" stroke="#ccc" stroke-width="1"/><path d="M2 12L13 3" stroke="#ccc" stroke-width="1"/></svg>
<div class="t" style="left:884px;top:980px;color:#ececec;font-size:12px;">Graph Editor</div>
<div class="a" style="left:959px;top:631px;width:7px;height:345px;background:#1e1e1e;"></div>
<div class="a" style="left:961px;top:806px;width:2px;height:1px;background:#777;"></div>
<div class="a" style="left:961px;top:809px;width:2px;height:1px;background:#777;"></div>
<div class="a" style="left:961px;top:812px;width:2px;height:1px;background:#777;"></div>
<div class="a" style="left:961px;top:815px;width:2px;height:1px;background:#777;"></div>
<div class="a" style="left:961px;top:818px;width:2px;height:1px;background:#777;"></div>
<div class="a" style="left:961px;top:821px;width:2px;height:1px;background:#777;"></div>
<div class="a" style="left:966px;top:631px;width:946px;height:345px;background:#2b2b2b;"></div>
<div class="a" style="left:966px;top:631px;width:946px;height:23px;background:#262626;"></div>
<div class="a" style="left:966px;top:654px;width:21px;height:310px;background:#212121;"></div>
<div class="a" style="left:1897px;top:654px;width:15px;height:310px;background:#212121;"></div>
<div class="a" style="left:985px;top:646px;width:1px;height:8px;background:#9a9a9a;"></div>
<div class="a" style="left:996px;top:650px;width:1px;height:4px;background:#707070;"></div>
<div class="a" style="left:1007px;top:650px;width:1px;height:4px;background:#707070;"></div>
<div class="a" style="left:1018px;top:650px;width:1px;height:4px;background:#707070;"></div>
<div class="a" style="left:1029px;top:650px;width:1px;height:4px;background:#707070;"></div>
<div class="a" style="left:1040px;top:646px;width:1px;height:8px;background:#9a9a9a;"></div>
<div class="a" style="left:1050px;top:650px;width:1px;height:4px;background:#707070;"></div>
<div class="a" style="left:1061px;top:650px;width:1px;height:4px;background:#707070;"></div>
<div class="a" style="left:1072px;top:650px;width:1px;height:4px;background:#707070;"></div>
<div class="a" style="left:1083px;top:650px;width:1px;height:4px;background:#707070;"></div>
<div class="a" style="left:1094px;top:646px;width:1px;height:8px;background:#9a9a9a;"></div>
<div class="a" style="left:1105px;top:650px;width:1px;height:4px;background:#707070;"></div>
<div class="a" style="left:1116px;top:650px;width:1px;height:4px;background:#707070;"></div>
<div class="a" style="left:1127px;top:650px;width:1px;height:4px;background:#707070;"></div>
<div class="a" style="left:1138px;top:650px;width:1px;height:4px;background:#707070;"></div>
<div class="a" style="left:1148px;top:646px;width:1px;height:8px;background:#9a9a9a;"></div>
<div class="a" style="left:1159px;top:650px;width:1px;height:4px;background:#707070;"></div>
<div class="a" style="left:1170px;top:650px;width:1px;height:4px;background:#707070;"></div>
<div class="a" style="left:1181px;top:650px;width:1px;height:4px;background:#707070;"></div>
<div class="a" style="left:1192px;top:650px;width:1px;height:4px;background:#707070;"></div>
<div class="a" style="left:1203px;top:646px;width:1px;height:8px;background:#9a9a9a;"></div>
<div class="a" style="left:1214px;top:650px;width:1px;height:4px;background:#707070;"></div>
<div class="a" style="left:1225px;top:650px;width:1px;height:4px;background:#707070;"></div>
<div class="a" style="left:1236px;top:650px;width:1px;height:4px;background:#707070;"></div>
<div class="a" style="left:1247px;top:650px;width:1px;height:4px;background:#707070;"></div>
<div class="a" style="left:1258px;top:646px;width:1px;height:8px;background:#9a9a9a;"></div>
<div class="a" style="left:1268px;top:650px;width:1px;height:4px;background:#707070;"></div>
<div class="a" style="left:1279px;top:650px;width:1px;height:4px;background:#707070;"></div>
<div class="a" style="left:1290px;top:650px;width:1px;height:4px;background:#707070;"></div>
<div class="a" style="left:1301px;top:650px;width:1px;height:4px;background:#707070;"></div>
<div class="a" style="left:1312px;top:646px;width:1px;height:8px;background:#9a9a9a;"></div>
<div class="a" style="left:1323px;top:650px;width:1px;height:4px;background:#707070;"></div>
<div class="a" style="left:1334px;top:650px;width:1px;height:4px;background:#707070;"></div>
<div class="a" style="left:1345px;top:650px;width:1px;height:4px;background:#707070;"></div>
<div class="a" style="left:1356px;top:650px;width:1px;height:4px;background:#707070;"></div>
<div class="a" style="left:1366px;top:646px;width:1px;height:8px;background:#9a9a9a;"></div>
<div class="a" style="left:1377px;top:650px;width:1px;height:4px;background:#707070;"></div>
<div class="a" style="left:1388px;top:650px;width:1px;height:4px;background:#707070;"></div>
<div class="a" style="left:1399px;top:650px;width:1px;height:4px;background:#707070;"></div>
<div class="a" style="left:1410px;top:650px;width:1px;height:4px;background:#707070;"></div>
<div class="a" style="left:1421px;top:646px;width:1px;height:8px;background:#9a9a9a;"></div>
<div class="a" style="left:1432px;top:650px;width:1px;height:4px;background:#707070;"></div>
<div class="a" style="left:1443px;top:650px;width:1px;height:4px;background:#707070;"></div>
<div class="a" style="left:1454px;top:650px;width:1px;height:4px;background:#707070;"></div>
<div class="a" style="left:1465px;top:650px;width:1px;height:4px;background:#707070;"></div>
<div class="a" style="left:1476px;top:646px;width:1px;height:8px;background:#9a9a9a;"></div>
<div class="a" style="left:1486px;top:650px;width:1px;height:4px;background:#707070;"></div>
<div class="a" style="left:1497px;top:650px;width:1px;height:4px;background:#707070;"></div>
<div class="a" style="left:1508px;top:650px;width:1px;height:4px;background:#707070;"></div>
<div class="a" style="left:1519px;top:650px;width:1px;height:4px;background:#707070;"></div>
<div class="a" style="left:1530px;top:646px;width:1px;height:8px;background:#9a9a9a;"></div>
<div class="a" style="left:1541px;top:650px;width:1px;height:4px;background:#707070;"></div>
<div class="a" style="left:1552px;top:650px;width:1px;height:4px;background:#707070;"></div>
<div class="a" style="left:1563px;top:650px;width:1px;height:4px;background:#707070;"></div>
<div class="a" style="left:1574px;top:650px;width:1px;height:4px;background:#707070;"></div>
<div class="a" style="left:1584px;top:646px;width:1px;height:8px;background:#9a9a9a;"></div>
<div class="a" style="left:1595px;top:650px;width:1px;height:4px;background:#707070;"></div>
<div class="a" style="left:1606px;top:650px;width:1px;height:4px;background:#707070;"></div>
<div class="a" style="left:1617px;top:650px;width:1px;height:4px;background:#707070;"></div>
<div class="a" style="left:1628px;top:650px;width:1px;height:4px;background:#707070;"></div>
<div class="a" style="left:1639px;top:646px;width:1px;height:8px;background:#9a9a9a;"></div>
<div class="a" style="left:1650px;top:650px;width:1px;height:4px;background:#707070;"></div>
<div class="a" style="left:1661px;top:650px;width:1px;height:4px;background:#707070;"></div>
<div class="a" style="left:1672px;top:650px;width:1px;height:4px;background:#707070;"></div>
<div class="a" style="left:1683px;top:650px;width:1px;height:4px;background:#707070;"></div>
<div class="a" style="left:1694px;top:646px;width:1px;height:8px;background:#9a9a9a;"></div>
<div class="a" style="left:1704px;top:650px;width:1px;height:4px;background:#707070;"></div>
<div class="a" style="left:1715px;top:650px;width:1px;height:4px;background:#707070;"></div>
<div class="a" style="left:1726px;top:650px;width:1px;height:4px;background:#707070;"></div>
<div class="a" style="left:1737px;top:650px;width:1px;height:4px;background:#707070;"></div>
<div class="a" style="left:1748px;top:646px;width:1px;height:8px;background:#9a9a9a;"></div>
<div class="a" style="left:1759px;top:650px;width:1px;height:4px;background:#707070;"></div>
<div class="a" style="left:1770px;top:650px;width:1px;height:4px;background:#707070;"></div>
<div class="a" style="left:1781px;top:650px;width:1px;height:4px;background:#707070;"></div>
<div class="a" style="left:1792px;top:650px;width:1px;height:4px;background:#707070;"></div>
<div class="a" style="left:1802px;top:646px;width:1px;height:8px;background:#9a9a9a;"></div>
<div class="a" style="left:1813px;top:650px;width:1px;height:4px;background:#707070;"></div>
<div class="a" style="left:1824px;top:650px;width:1px;height:4px;background:#707070;"></div>
<div class="a" style="left:1835px;top:650px;width:1px;height:4px;background:#707070;"></div>
<div class="a" style="left:1846px;top:650px;width:1px;height:4px;background:#707070;"></div>
<div class="a" style="left:1857px;top:646px;width:1px;height:8px;background:#9a9a9a;"></div>
<div class="a" style="left:1868px;top:650px;width:1px;height:4px;background:#707070;"></div>
<div class="a" style="left:1879px;top:650px;width:1px;height:4px;background:#707070;"></div>
<div class="a" style="left:1890px;top:650px;width:1px;height:4px;background:#707070;"></div>
<div class="a" style="left:1901px;top:650px;width:1px;height:4px;background:#707070;"></div>
<div class="t" style="left:982px;top:631px;color:#dcdcdc;font-size:12px;">0</div>
<div class="t" style="left:1033px;top:631px;color:#dcdcdc;font-size:12px;">15</div>
<div class="t" style="left:1087px;top:631px;color:#dcdcdc;font-size:12px;">30</div>
<div class="t" style="left:1142px;top:631px;color:#dcdcdc;font-size:12px;">45</div>
<div class="t" style="left:1196px;top:631px;color:#dcdcdc;font-size:12px;">60</div>
<div class="t" style="left:1251px;top:631px;color:#dcdcdc;font-size:12px;">75</div>
<div class="t" style="left:1305px;top:631px;color:#dcdcdc;font-size:12px;">90</div>
<div class="t" style="left:1356px;top:631px;color:#dcdcdc;font-size:12px;">105</div>
<div class="t" style="left:1411px;top:631px;color:#dcdcdc;font-size:12px;">120</div>
<div class="t" style="left:1465px;top:631px;color:#dcdcdc;font-size:12px;">135</div>
<div class="t" style="left:1520px;top:631px;color:#dcdcdc;font-size:12px;">150</div>
<div class="t" style="left:1574px;top:631px;color:#dcdcdc;font-size:12px;">165</div>
<div class="t" style="left:1629px;top:631px;color:#dcdcdc;font-size:12px;">180</div>
<div class="t" style="left:1683px;top:631px;color:#dcdcdc;font-size:12px;">195</div>
<div class="t" style="left:1738px;top:631px;color:#dcdcdc;font-size:12px;">210</div>
<div class="t" style="left:1792px;top:631px;color:#dcdcdc;font-size:12px;">225</div>
<div class="t" style="left:1847px;top:631px;color:#dcdcdc;font-size:12px;">240</div>
<div class="t" style="left:1901px;top:631px;color:#666;font-size:12px;">255</div>
<div class="a" style="left:987px;top:654px;width:905px;height:16px;background:#464646;"></div>
<div class="a" style="left:982px;top:654px;width:5px;height:17px;background:#7fcfb0;border-radius:2px;"></div>
<div class="a" style="left:1892px;top:654px;width:5px;height:17px;background:#7fcfb0;border-radius:2px;"></div>
<div class="a" style="left:987px;top:674px;width:905px;height:18px;background:repeating-linear-gradient(135deg,#88f5b0 0px,#72dd98 1.4px,#72dd98 12.2px,#88f5b0 12.8px,#6fd696 13.6px,#66cb8a 14.5px,#62c486 25.2px);border-radius:3px 0 0 3px;"></div>
<div class="t" style="left:995px;top:675px;color:#161616;font-size:12px;">Color Array</div>
<div class="a" style="left:987px;top:696px;width:905px;height:18px;background:repeating-linear-gradient(135deg,#e0ff90 0px,#c9ef7c 1.4px,#c9ef7c 12.2px,#e0ff90 12.8px,#c4ea78 13.6px,#b8da6e 14.5px,#b3d46a 25.2px);border-radius:3px 0 0 3px;"></div>
<div class="t" style="left:995px;top:697px;color:#161616;font-size:12px;">Random [Index]</div>
<div class="a" style="left:987px;top:718px;width:905px;height:18px;background:repeating-linear-gradient(135deg,#e0ff90 0px,#c9ef7c 1.4px,#c9ef7c 12.2px,#e0ff90 12.8px,#c4ea78 13.6px,#b8da6e 14.5px,#b3d46a 25.2px);border-radius:3px 0 0 3px;"></div>
<div class="t" style="left:995px;top:719px;color:#161616;font-size:12px;">Oscillator [Position.Z] Cosine</div>
<div class="a" style="left:987px;top:740px;width:905px;height:18px;background:repeating-linear-gradient(135deg,#e0ff90 0px,#c9ef7c 1.4px,#c9ef7c 12.2px,#e0ff90 12.8px,#c4ea78 13.6px,#b8da6e 14.5px,#b3d46a 25.2px);border-radius:3px 0 0 3px;"></div>
<div class="t" style="left:995px;top:741px;color:#161616;font-size:12px;">Oscillator [Position.X] Sine</div>
<div class="a" style="left:987px;top:762px;width:905px;height:18px;background:radial-gradient(circle,#b8da6e 1px,transparent 1.3px) 0 0/3px 3px,#c9ef7c;border:1px solid #f0f7e0;"></div>
<div class="t" style="left:995px;top:763px;color:#161616;font-size:12px;">3D Matrix [Duplicator]</div>
<div class="a" style="left:987px;top:784px;width:905px;height:18px;background:#ffe47c;border-radius:3px;"></div>
<div class="t" style="left:995px;top:785px;color:#161616;font-size:12px;">Duplicator</div>
<div class="a" style="left:987px;top:806px;width:905px;height:18px;background:#ffe47c;border-radius:3px;"></div>
<div class="t" style="left:995px;top:807px;color:#161616;font-size:12px;">Ellipse Shape</div>
<div class="a" style="left:987px;top:828px;width:905px;height:18px;background:repeating-linear-gradient(135deg,#7aa2ff 0px,#6a8fe8 1.4px,#6a8fe8 12.2px,#7aa2ff 12.8px,#6688e0 13.6px,#5c7fd6 14.5px,#587ad0 25.2px);border-radius:3px 0 0 3px;"></div>
<div class="t" style="left:995px;top:829px;color:#f4f4f4;font-size:12px;">Index Context [Number]</div>
<div class="a" style="left:987px;top:850px;width:905px;height:18px;background:repeating-linear-gradient(135deg,#7aa2ff 0px,#6a8fe8 1.4px,#6a8fe8 12.2px,#7aa2ff 12.8px,#6688e0 13.6px,#5c7fd6 14.5px,#587ad0 25.2px);border-radius:3px 0 0 3px;"></div>
<div class="t" style="left:995px;top:851px;color:#f4f4f4;font-size:12px;">String Generator [String]</div>
<div class="a" style="left:987px;top:872px;width:905px;height:18px;background:#b893f2;border-radius:3px;"></div>
<div class="t" style="left:995px;top:873px;color:#f4f4f4;font-size:12px;">Cavalry</div>
<div class="a" style="left:966px;top:762px;width:21px;height:18px;background:#2e2e2e;"></div>
<div class="a" style="left:1897px;top:762px;width:15px;height:18px;background:#2e2e2e;"></div>
<div class="a" style="left:1134px;top:652px;width:1px;height:311px;background:#66c2a0;"></div>
<svg class="a" style="left:1127px;top:644px;" width="16" height="9" viewBox="0 0 16 9"><path d="M0 0H16L8 9Z" fill="#70cfae"/></svg>
<div class="a" style="left:968px;top:965px;width:943px;height:9px;background:#4a4a4a;border-radius:4px;"></div>
<div class="a" style="left:966px;top:976px;width:946px;height:22px;background:#3a3a3a;"></div>
<div class="a" style="left:969px;top:978px;width:19px;height:19px;background:#2e2e2e;border-radius:3px;border:1px solid #222;"></div>
<svg class="a" style="left:971px;top:981px;" width="15" height="13" viewBox="0 0 15 13"><path d="M1 1H14M1 5H4M6 5H9M11 5H14M1 9H4M6 9H8M1 12H5" stroke="#ccc" stroke-width="1.3"/></svg>
<div class="a" style="left:990px;top:978px;width:150px;height:19px;background:#2b2b2b;border-radius:3px;"></div>
<div class="t" style="left:992px;top:980px;color:#ececec;font-size:12px;">Default Keyframe Layer</div>
<div class="a" style="left:1147px;top:978px;width:68px;height:19px;background:#2b2b2b;border-radius:3px;"></div>
<div class="t" style="left:1152px;top:980px;color:#555;font-size:12px;">F</div>
<div class="t" style="left:1164px;top:980px;color:#ddd;font-size:12px;">-</div>
<div class="t" style="left:1222px;top:980px;color:#ececec;font-size:12px;">Align:</div>
<div class="a" style="left:1258px;top:978px;width:53px;height:19px;background:#222;border-radius:3px;"></div>
<div class="a" style="left:1259px;top:979px;width:16px;height:17px;background:#2e2e2e;border-radius:2px;"></div>
<div class="a" style="left:1276px;top:979px;width:16px;height:17px;background:#2e2e2e;border-radius:2px;"></div>
<div class="a" style="left:1293px;top:979px;width:16px;height:17px;background:#2e2e2e;border-radius:2px;"></div>
<div class="a" style="left:1314px;top:978px;width:19px;height:19px;background:#222;border-radius:3px;"></div>
<div class="a" style="left:1315px;top:979px;width:16px;height:17px;background:#2e2e2e;border-radius:2px;"></div>
<div class="a" style="left:1336px;top:978px;width:31px;height:19px;background:#2e2e2e;border-radius:3px;border:1px solid #222;"></div>
<div class="a" style="left:1371px;top:978px;width:31px;height:19px;background:#2e2e2e;border-radius:3px;border:1px solid #222;"></div>
<svg class="a" style="left:1259px;top:979px;" width="52" height="17" viewBox="0 0 52 17"><path d="M4 3V14M6 5H9M6 8H12M6 11H10M24 3V14M19 6H22M26 6H29M19 10H29M46 3V14M40 5H44M37 8H44M39 11H44" stroke="#ddd" stroke-width="1.1"/></svg>
<svg class="a" style="left:1315px;top:979px;" width="16" height="17" viewBox="0 0 16 17"><rect x="3" y="3" width="10" height="11" fill="none" stroke="#ddd" stroke-dasharray="2 1.5"/><rect x="7" y="7" width="2" height="2" fill="#ddd"/></svg>
<svg class="a" style="left:1338px;top:980px;" width="28" height="15" viewBox="0 0 28 15"><path d="M3 11V7A4.5 4.5 0 0 1 12 7V9" fill="none" stroke="#ddd" stroke-width="2"/><path d="M20 4L25 7.5L20 11Z" fill="none" stroke="#999"/></svg>
<svg class="a" style="left:1373px;top:980px;" width="28" height="15" viewBox="0 0 28 15"><path d="M2 7.5H14M5 4V11M8 2V13M11 4V11" stroke="#ddd" stroke-width="1"/><path d="M20 4L25 7.5L20 11Z" fill="none" stroke="#999"/></svg>
<svg class="a" style="left:1742px;top:980px;" width="15" height="15" viewBox="0 0 15 15"><circle cx="6" cy="6" r="5" fill="none" stroke="#ccc" stroke-width="1.1"/><path d="M3.5 6H8.5" stroke="#ccc" stroke-width="1.1"/><path d="M10 10L13 13" stroke="#ccc" stroke-width="1.6"/></svg>
<div class="a" style="left:1766px;top:986px;width:114px;height:3px;background:#4a4a4a;border-radius:2px;"></div>
<div class="a" style="left:1761px;top:982px;width:11px;height:11px;background:#7fcfb0;border-radius:50%;border:2px solid #5aa88a;"></div>
<svg class="a" style="left:1886px;top:980px;" width="15" height="15" viewBox="0 0 15 15"><circle cx="6" cy="6" r="5" fill="none" stroke="#ccc" stroke-width="1.1"/><path d="M3.5 6H8.5M6 3.5V8.5" stroke="#ccc" stroke-width="1.1"/><path d="M10 10L13 13" stroke="#ccc" stroke-width="1.6"/></svg>
<div class="a" style="left:494px;top:998px;width:1420px;height:6px;background:#121212;"></div>
<div class="a" style="left:494px;top:1004px;width:1420px;height:22px;background:#3a3a3a;"></div>
<div class="a" style="left:498px;top:1010px;width:2px;height:2px;background:#888;"></div>
<div class="a" style="left:498px;top:1014px;width:2px;height:2px;background:#888;"></div>
<div class="a" style="left:498px;top:1018px;width:2px;height:2px;background:#888;"></div>
<div class="a" style="left:506px;top:1006px;width:19px;height:19px;background:#2e2e2e;border-radius:3px;border:1px solid #222;"></div>
<svg class="a" style="left:509px;top:1009px;" width="14" height="13" viewBox="0 0 14 13"><path d="M1 1H13V9H8L5 12V9H1Z" fill="#ddd"/><path d="M3 3.5H11M3 6H11" stroke="#2e2e2e"/></svg>
<div class="a" style="left:528px;top:1007px;width:18px;height:16px;background:#d86b6b;border-radius:2px;"></div>
<div class="t" style="left:533px;top:1009px;color:#3a1a1a;font-size:11px;">1</div>
<div class="a" style="left:554px;top:1012px;width:6px;height:6px;background:#e06060;border-radius:50%;"></div>
<div class="t" style="left:565px;top:1008px;color:#ececec;font-size:12px;">Save reminder: 92 minutes since your last save.</div>
<div class="t" style="left:1482px;top:1008px;color:#ececec;font-size:11.2px;font-style:italic;letter-spacing:-0.3px;">Click to see next message</div>
<div class="a" style="left:1610px;top:1006px;width:79px;height:19px;background:#d9c06f;border-radius:3px;"></div>
<div class="t" style="left:1614px;top:1008px;color:#2a2a2a;font-size:12px;">Feedback</div>
<svg class="a" style="left:1672px;top:1009px;" width="12" height="13" viewBox="0 0 12 13"><rect x="1" y="1" width="9" height="11" fill="#fff"/><path d="M3 9L10 2" stroke="#e86a4a" stroke-width="2"/></svg>
<div class="a" style="left:1693px;top:1006px;width:110px;height:19px;background:#2fc46a;border-radius:3px;"></div>
<div class="t" style="left:1698px;top:1008px;color:#1e2e1e;font-size:12px;">Upgrade to Pro</div>
<svg class="a" style="left:1785px;top:1010px;" width="14" height="11" viewBox="0 0 14 11"><circle cx="4" cy="6" r="3.5" fill="#f2c230"/><circle cx="10" cy="6" r="3.5" fill="#f2c230"/></svg>
<div class="a" style="left:1806px;top:1006px;width:105px;height:19px;background:#3ea4f0;border-radius:3px;"></div>
<div class="t" style="left:1810px;top:1008px;color:#102030;font-size:12px;">Tips and Tricks</div>
<svg class="a" style="left:1890px;top:1009px;" width="13" height="13" viewBox="0 0 13 13"><path d="M2 11L5 7L11 1L12 2L6 8Z" fill="#eee"/><path d="M2 11L4 9" stroke="#e05050" stroke-width="2"/></svg>
<svg class="a" style="left:0;top:0" width="1920" height="1030"><path d="M224 393C580 393 580 749 936 749" fill="none" stroke="#2396d6" stroke-width="1.1"/><circle cx="224" cy="393" r="5" fill="#3ab0f0"/><circle cx="936" cy="749" r="5.5" fill="#3ab0f0"/><rect x="8.5" y="381.5" width="269" height="24" fill="none" stroke="#c2e82c" stroke-width="3"/><rect x="873.5" y="733.5" width="80" height="31" fill="none" stroke="#c2e82c" stroke-width="3"/><path d="M384 412.5L403 399V406H426V419H403V426Z" fill="none" stroke="#c2e82c" stroke-width="3" stroke-linejoin="miter"/></svg>
</body></html>
